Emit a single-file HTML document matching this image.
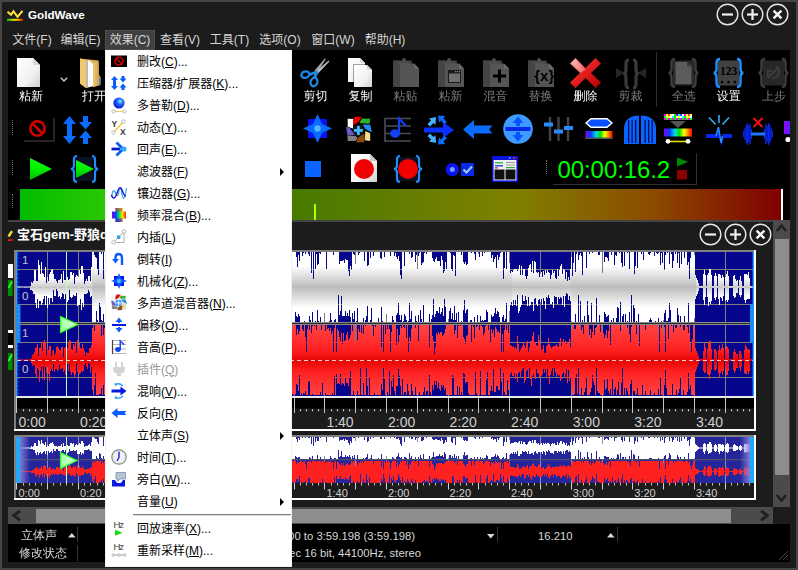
<!DOCTYPE html><html><head><meta charset="utf-8"><title>GoldWave</title><style>
*{box-sizing:border-box;margin:0;padding:0}
html,body{width:798px;height:570px;overflow:hidden;background:#1c1c1c}
body{position:relative;font-family:"Liberation Sans","Noto Sans CJK SC",sans-serif;font-size:12px;color:#fff}
.abs,svg.i{position:absolute}
svg{overflow:visible;display:block}
#frame{position:absolute;left:0;top:0;width:798px;height:570px;border:2px solid #454545;pointer-events:none;z-index:50}
#title{position:absolute;left:28px;top:7px;font-weight:bold;font-size:11.7px;line-height:16px;color:#fff;white-space:nowrap}
.mb{position:absolute;top:30px;height:20px;line-height:20px;font-size:12px;color:#d6d6d6;white-space:nowrap;text-align:center}
.mb.sel{background:#404040;outline:1px dotted #5a5a5a;outline-offset:-1px}
#tb{position:absolute;left:8px;top:50px;width:782px;height:170px;background:#000;overflow:hidden}
.lbl{position:absolute;top:39px;width:40px;text-align:center;font-size:12px;line-height:14px;color:#fff;white-space:nowrap;font-family:"Liberation Sans","WenQuanYi Zen Hei","Noto Sans CJK SC",sans-serif}
.lbl.d{color:#7c7c7c}
.grip{position:absolute;width:1px;border-left:1px dotted #777}
#menu{position:absolute;left:105px;top:50px;width:187px;height:517px;background:#fff;border:1px solid #f0f0f0;border-top-color:#fff;z-index:40;color:#000;overflow:hidden}
.mi{position:absolute;left:0;width:185px;height:22px;line-height:22px;font-size:12px;white-space:nowrap}
.mi span.t{position:absolute;left:31px;top:0}
.mi.dis{color:#9a9a9a}
.mi u{text-decoration:underline;text-underline-offset:1px}
.arr{position:absolute;left:174px;top:7px;width:0;height:0;border-left:4px solid #000;border-top:4px solid transparent;border-bottom:4px solid transparent}
#status{position:absolute;left:8px;top:524px;width:782px;height:38px;background:#000;overflow:hidden;font-size:11.3px;color:#d8d8d8}
#status .c{position:absolute;white-space:nowrap;line-height:14px}
#status .cj{font-family:"Liberation Sans","WenQuanYi Zen Hei","Noto Sans CJK SC",sans-serif;font-size:12px}
.vsep{position:absolute;width:1px;background:#383838}
.tl{position:absolute;font-size:14px;line-height:14px;color:#cfcfcf;white-space:nowrap}
.tl2{position:absolute;font-size:11px;line-height:11px;color:#cfcfcf;white-space:nowrap}
</style></head><body>
<svg class="i" style="left:7px;top:10px" width="16" height="11" viewBox="0 0 16 11" ><defs><linearGradient id="gbar" x1="0" x2="1" y1="0" y2="0"><stop offset="0" stop-color="#00d000"/><stop offset="0.45" stop-color="#e8e800"/><stop offset="0.7" stop-color="#ffb000"/><stop offset="1" stop-color="#ff0000"/></linearGradient></defs><polyline points="0.5,1.8 4,4.8 6.5,1.2 10.5,6.8 15.5,0.8" fill="none" stroke="#ffe23a" stroke-width="2.1" stroke-linejoin="miter"/><rect x="0" y="8.8" width="16" height="2" fill="url(#gbar)"/></svg>
<div id="title">GoldWave</div>
<svg class="i" style="left:716.2px;top:3.0999999999999996px" width="23" height="23" viewBox="0 0 23 23" ><circle cx="11.5" cy="11.5" r="10.3" fill="none" stroke="#e6e6e6" stroke-width="1.4"/><rect x="6" y="10.4" width="11" height="2.2" fill="#f0f0f0"/></svg>
<svg class="i" style="left:741.2px;top:3.0999999999999996px" width="23" height="23" viewBox="0 0 23 23" ><circle cx="11.5" cy="11.5" r="10.3" fill="none" stroke="#e6e6e6" stroke-width="1.4"/><rect x="6" y="10.4" width="11" height="2.2" fill="#f0f0f0"/><rect x="10.4" y="6" width="2.2" height="11" fill="#f0f0f0"/></svg>
<svg class="i" style="left:766.2px;top:3.0999999999999996px" width="23" height="23" viewBox="0 0 23 23" ><circle cx="11.5" cy="11.5" r="10.3" fill="none" stroke="#e6e6e6" stroke-width="1.4"/><path d="M7.6 7.6L15.4 15.4M15.4 7.6L7.6 15.4" stroke="#f4f4f4" stroke-width="2.4"/></svg>
<div class="mb" style="left:8px;width:48px">文件(F)</div>
<div class="mb" style="left:56px;width:49px">编辑(E)</div>
<div class="mb sel" style="left:105px;width:50px">效果(C)</div>
<div class="mb" style="left:155px;width:50px">查看(V)</div>
<div class="mb" style="left:205px;width:49px">工具(T)</div>
<div class="mb" style="left:254px;width:52px">选项(O)</div>
<div class="mb" style="left:306px;width:54px">窗口(W)</div>
<div class="mb" style="left:360px;width:50px">帮助(H)</div>
<div id="tb">
<svg width="0" height="0" style="position:absolute"><defs>
<linearGradient id="pg" x1="0" y1="0" x2="1" y2="1"><stop offset="0" stop-color="#ffffff"/><stop offset="0.6" stop-color="#f2f2f2"/><stop offset="1" stop-color="#cfcfcf"/></linearGradient>
<linearGradient id="rainbow" x1="0" x2="1" y1="0" y2="0"><stop offset="0" stop-color="#8000ff"/><stop offset="0.2" stop-color="#0040ff"/><stop offset="0.4" stop-color="#00e0e0"/><stop offset="0.55" stop-color="#00e000"/><stop offset="0.72" stop-color="#ffff00"/><stop offset="0.86" stop-color="#ff8000"/><stop offset="1" stop-color="#ff0000"/></linearGradient>
<linearGradient id="gplay" x1="0" y1="0" x2="0" y2="1"><stop offset="0" stop-color="#10ff10"/><stop offset="0.5" stop-color="#00f000"/><stop offset="1" stop-color="#00b800"/></linearGradient>
<linearGradient id="redx" x1="0" y1="0" x2="1" y2="1"><stop offset="0" stop-color="#ffb0b0"/><stop offset="0.45" stop-color="#e82020"/><stop offset="1" stop-color="#b00000"/></linearGradient>
<linearGradient id="fold" x1="0" y1="0" x2="1" y2="0"><stop offset="0" stop-color="#f0c878"/><stop offset="1" stop-color="#c8963c"/></linearGradient>
<radialGradient id="ball" cx="0.6" cy="0.35" r="0.7"><stop offset="0" stop-color="#9fe8ff"/><stop offset="0.35" stop-color="#1e78ff"/><stop offset="1" stop-color="#0000d0"/></radialGradient>
</defs></svg>
<div class="grip" style="left:4px;top:70px;height:15px"></div>
<div class="grip" style="left:4px;top:110px;height:15px"></div>
<div class="grip" style="left:4px;top:144px;height:14px"></div>
<div class="grip" style="left:538px;top:110px;height:14px"></div>
<svg class="i" style="left:9px;top:8px" width="23" height="29" viewBox="0 0 23 29" ><path d="M0 0H16L23 7V29H0Z" fill="url(#pg)"/><path d="M16 0V7H23Z" fill="#d8d8d8"/></svg>
<svg class="i" style="left:52px;top:27px" width="8" height="5" viewBox="0 0 8 5" ><path d="M0.8 0.8L4 4L7.2 0.8" fill="none" stroke="#c8c8c8" stroke-width="1.5"/></svg>
<svg class="i" style="left:72px;top:8px" width="22" height="31" viewBox="0 0 22 31" ><path d="M0 0.5L18.5 2.5L19 18L14 28L6 30L0 25.5Z" fill="#dcae54"/><path d="M0 0.5L6 3V30L0 25.5Z" fill="#f0c870"/><path d="M6 3.2L9.5 2.2L13 6V28L7 29.6Z" fill="#fcfcfc"/><path d="M6 3.2L8 3V29.2L7 29.6L6 29Z" fill="#b8b8b8"/><path d="M13 5L18.5 3L19 17L20.6 19V27L13 29.2Z" fill="url(#fold)"/><rect x="19.2" y="20" width="1.5" height="7" fill="#3c78e0"/></svg>
<div class="lbl" style="left:3px">粘新</div>
<div class="lbl" style="left:66px">打开</div>
<svg class="i" style="left:292px;top:7px" width="30" height="31" viewBox="0 0 30 31" ><path d="M14.6 13.6L25 1.3L25.8 2L17.4 15.4Z" fill="#a4a4a4"/><path d="M15.2 15L28.6 3.5L29.4 4.4L17.8 16.8Z" fill="#b8b8b8"/><path d="M8.5 16.5L17 13.2L18.4 15.6L10 19Z" fill="#1e88e0"/><path d="M13 20.5L15.6 14.2L18.2 15.2L16.2 21.5Z" fill="#1e88e0"/><ellipse cx="5.3" cy="17.6" rx="4.1" ry="3.1" transform="rotate(-18 5.3 17.6)" fill="none" stroke="#1e88e0" stroke-width="2.3"/><ellipse cx="14" cy="25" rx="3.3" ry="4.3" transform="rotate(18 14 25)" fill="none" stroke="#1e88e0" stroke-width="2.3"/></svg>
<div class="lbl" style="left:287.5px">剪切</div>
<svg class="i" style="left:340px;top:8px" width="17" height="24" viewBox="0 0 17 24" ><path d="M0 0H12L17 5V24H0Z" fill="url(#pg)"/><path d="M12 0V5H17Z" fill="#d8d8d8"/></svg>
<svg class="i" style="left:346px;top:15px" width="19" height="22" viewBox="0 0 19 22" ><path d="M-1 -1H15L20 5V23H-1Z" fill="#000" opacity="0.35"/><path d="M0 0H13L18 5V22H0Z" fill="url(#pg)"/><path d="M13 0V5H18Z" fill="#d8d8d8"/></svg>
<div class="lbl" style="left:332.5px">复制</div>
<svg class="i" style="left:385px;top:8px" width="26" height="29" viewBox="0 0 26 29" ><rect x="0" y="2.5" width="19" height="26.5" fill="#3a3a3a"/><rect x="0" y="2.5" width="7" height="26.5" fill="#444"/><path d="M5 4.5Q5 3 7 3H9Q9 0 11 0Q13 0 13 3H15Q17 3 17 4.5V6H5Z" fill="#4c4c4c"/><path d="M7 5.5H21L26 10.5V29H7Z" fill="#555"/><path d="M21 5.5V10.5H26Z" fill="#6a6a6a"/></svg>
<div class="lbl d" style="left:377.5px">粘贴</div>
<svg class="i" style="left:430px;top:8px" width="26" height="29" viewBox="0 0 26 29" ><rect x="0" y="2.5" width="19" height="26.5" fill="#3a3a3a"/><rect x="0" y="2.5" width="7" height="26.5" fill="#444"/><path d="M5 4.5Q5 3 7 3H9Q9 0 11 0Q13 0 13 3H15Q17 3 17 4.5V6H5Z" fill="#4c4c4c"/><path d="M7 5.5H21L26 10.5V29H7Z" fill="#555"/><path d="M21 5.5V10.5H26Z" fill="#6a6a6a"/><rect x="10" y="12" width="13" height="13" fill="#1a1a1a"/><rect x="11" y="15.5" width="11" height="8.5" fill="#707070"/><rect x="17" y="13" width="1.2" height="1.2" fill="#888"/><rect x="19" y="13" width="1.2" height="1.2" fill="#888"/><rect x="21" y="13" width="1.2" height="1.2" fill="#888"/></svg>
<div class="lbl d" style="left:422.5px">粘新</div>
<svg class="i" style="left:475px;top:8px" width="26" height="29" viewBox="0 0 26 29" ><rect x="0" y="2.5" width="19" height="26.5" fill="#3a3a3a"/><rect x="0" y="2.5" width="7" height="26.5" fill="#444"/><path d="M5 4.5Q5 3 7 3H9Q9 0 11 0Q13 0 13 3H15Q17 3 17 4.5V6H5Z" fill="#4c4c4c"/><path d="M7 5.5H21L26 10.5V29H7Z" fill="#555"/><path d="M21 5.5V10.5H26Z" fill="#6a6a6a"/><rect x="10" y="16.5" width="13" height="3" fill="#000"/><rect x="15" y="11.5" width="3" height="13" fill="#000"/></svg>
<div class="lbl d" style="left:467.5px">混音</div>
<svg class="i" style="left:520px;top:8px" width="26" height="29" viewBox="0 0 26 29" ><rect x="0" y="2.5" width="19" height="26.5" fill="#3a3a3a"/><rect x="0" y="2.5" width="7" height="26.5" fill="#444"/><path d="M5 4.5Q5 3 7 3H9Q9 0 11 0Q13 0 13 3H15Q17 3 17 4.5V6H5Z" fill="#4c4c4c"/><path d="M7 5.5H21L26 10.5V29H7Z" fill="#555"/><path d="M21 5.5V10.5H26Z" fill="#6a6a6a"/><text x="16.3" y="23" font-family="Liberation Sans,sans-serif" font-size="15" font-weight="bold" text-anchor="middle" fill="#000">{x}</text></svg>
<div class="lbl d" style="left:512.5px">替换</div>
<svg class="i" style="left:562px;top:8px" width="31" height="30" viewBox="0 0 31 30" ><path d="M5.5 0L15.5 10L25.5 0L31 5.5L21 15L31 24.5L25.5 30L15.5 20L5.5 30L0 24.5L10 15L0 5.5Z" fill="url(#redx)"/><path d="M5.5 1.5L15.5 11.5L10.5 15L1.5 5.5Z" fill="#fff" opacity="0.35"/></svg>
<div class="lbl" style="left:557.5px">删除</div>
<svg class="i" style="left:608px;top:9px" width="30" height="30" viewBox="0 0 30 30" ><path d="M0 9L8 14L0 19ZM30 9L22 14L30 19Z" fill="#262626"/><path d="M13 1Q10 1 10 4.5V11Q10 14 7.5 14.5Q10 15 10 18V25Q10 29 13 29M17 1Q20 1 20 4.5V11Q20 14 22.5 14.5Q20 15 20 18V25Q20 29 17 29" fill="none" stroke="#3a3a3a" stroke-width="3.2"/></svg>
<div class="lbl d" style="left:602.5px">剪裁</div>
<div class="vsep" style="left:648px;top:2px;height:55px;background:#2e2e2e"></div>
<svg class="i" style="left:660px;top:8px" width="31" height="30" viewBox="0 0 31 30" ><rect x="5" y="2.5" width="21" height="25" fill="#2a2a2a"/><path d="M7.5 4H19L23.5 8.5V26H7.5Z" fill="#5c5c5c"/><path d="M19 4V8.5H23.5Z" fill="#3a3a3a"/><path d="M7 1Q3.5 1 3.5 5V11Q3.5 14.5 0.8 15Q3.5 15.5 3.5 19V25Q3.5 29 7 29" fill="none" stroke="#3e3e3e" stroke-width="2.4"/><path d="M24 1Q27.5 1 27.5 5V11Q27.5 14.5 30.2 15Q27.5 15.5 27.5 19V25Q27.5 29 24 29" fill="none" stroke="#3e3e3e" stroke-width="2.4"/></svg>
<div class="lbl d" style="left:655.8px">全选</div>
<svg class="i" style="left:705px;top:8px" width="31" height="30" viewBox="0 0 31 30" ><rect x="5" y="2.5" width="21" height="25" fill="#414141"/><text x="15.5" y="17" font-family="Liberation Serif,serif" font-weight="bold" font-size="11.5" text-anchor="middle" fill="#000">123</text><path d="M9 22.5l1.6 1.6l-1.6 1.6l-1.6-1.6ZM15.5 22.5l1.6 1.6l-1.6 1.6l-1.6-1.6ZM22 22.5l1.6 1.6l-1.6 1.6l-1.6-1.6Z" fill="#000"/><path d="M7 1Q3.5 1 3.5 5V11Q3.5 14.5 0.8 15Q3.5 15.5 3.5 19V25Q3.5 29 7 29" fill="none" stroke="#1e90ff" stroke-width="2.4"/><path d="M24 1Q27.5 1 27.5 5V11Q27.5 14.5 30.2 15Q27.5 15.5 27.5 19V25Q27.5 29 24 29" fill="none" stroke="#1e90ff" stroke-width="2.4"/></svg>
<div class="lbl" style="left:700.7px">设置</div>
<svg class="i" style="left:750px;top:8px" width="31" height="30" viewBox="0 0 31 30" ><rect x="5" y="2.5" width="21" height="25" fill="#272727"/><path d="M10 20V13H14.5M10 20L19 11M14 20Q21 20 21 13.5Q21 10 18 9" fill="none" stroke="#3c3c3c" stroke-width="2.2"/><path d="M7 1Q3.5 1 3.5 5V11Q3.5 14.5 0.8 15Q3.5 15.5 3.5 19V25Q3.5 29 7 29" fill="none" stroke="#3e3e3e" stroke-width="2.4"/><path d="M24 1Q27.5 1 27.5 5V11Q27.5 14.5 30.2 15Q27.5 15.5 27.5 19V25Q27.5 29 24 29" fill="none" stroke="#3e3e3e" stroke-width="2.4"/></svg>
<div class="lbl d" style="left:745.9px">上步</div>
<svg class="i" style="left:15px;top:67px" width="32" height="25" viewBox="0 0 32 25" ><rect x="0.5" y="0.5" width="30" height="23" fill="#000"/><path d="M1 24H31V1" fill="none" stroke="#303030" stroke-width="1.6"/><circle cx="14.5" cy="11.5" r="7.2" fill="none" stroke="#d40000" stroke-width="2.6"/><path d="M9.5 6.5L19.5 16.5" stroke="#d40000" stroke-width="2.6"/></svg>
<svg class="i" style="left:54px;top:66px" width="32" height="29" viewBox="0 0 32 29" ><path d="M7.5 0L14 8H10V20H14L7.5 28L1 20H5V8H1Z" fill="#0a6cff"/><path d="M21 0H26V6H30L23.5 13.5L17 6H21ZM23.5 14.5L30 22H26V28H21V22H17Z" fill="#0a6cff"/></svg>
<svg class="i" style="left:295px;top:64px" width="29" height="29" viewBox="0 0 29 29" ><rect x="5" y="5" width="19" height="19" fill="#0a14f0"/><path d="M14.5 0L19 10L29 14.5L19 19L14.5 29L10 19L0 14.5L10 10Z" fill="#0a6cff"/><circle cx="14.5" cy="14.5" r="3.2" fill="#50b8ff"/></svg>
<svg class="i" style="left:338px;top:67px" width="26" height="26" viewBox="0 0 26 26" ><path d="M1.7 1.8L7.3 2.1L7.0 11.6L1.7 9.8Z" fill="#ffffff"/><path d="M9.1 -0.3L15.8 -0.3L12.9 4.6L7.3 8.4L7.0 3.5Z" fill="#f00000"/><path d="M15.8 1.4L24.2 1.8L23.5 6.7L13.3 6.0Z" fill="#28b428"/><path d="M16.5 7.4L24.2 7.7L25.9 15.5L19.3 11.9Z" fill="#1e8cf0"/><path d="M19.3 14.1L24.2 16.2L24.2 23.9L18.6 23.2Z" fill="#f0dc90"/><path d="M18.2 16.5L18.2 25.3L10.1 25.6L12.2 20.4Z" fill="#8c4a10"/><path d="M1.4 18.3L10.1 19.3L11.5 21.1L9.8 23.9L1.7 23.9Z" fill="#808080"/><path d="M-0.0 9.8L3.8 10.9L9.1 18.3L1.4 17.9Z" fill="#6a5acd"/><circle cx="12.4" cy="13.4" r="5.6" fill="#181818"/><path d="M12.4 8.9V17.9M7.9 13.4H16.9" stroke="#40b8ff" stroke-width="2.8"/></svg>
<svg class="i" style="left:376px;top:67px" width="28" height="26" viewBox="0 0 28 26" ><path d="M1 1V25M1 1.5H27M1 9H27M1 16.5H27M1 24H27" stroke="#4a4e58" stroke-width="1.6" fill="none"/><ellipse cx="11" cy="16.5" rx="5" ry="4.3" fill="#1040f0"/><path d="M15 16V1.5L22 9" stroke="#1040f0" stroke-width="2.2" fill="none"/></svg>
<svg class="i" style="left:416px;top:65px" width="30" height="30" viewBox="0 0 30 30" ><path d="M0 12.5H19V7L30 15L19 23V17.5H0Z" fill="#0a30ff"/><path d="M12 2L5 3.5L7 5.5L3.5 9L6 11.5L9.5 8L11.5 10ZM12 28L5 26.5L7 24.5L3.5 21L6 18.5L9.5 22L11.5 20Z" fill="#40b0ff"/><path d="M14 0.5L21 1L19.5 3.5L23 7L20.5 9L17 5.5L15 7.5ZM14 29.5L21 29L19.5 26.5L23 23L20.5 21L17 24.5L15 22.5Z" fill="#0a6cff"/></svg>
<svg class="i" style="left:455px;top:70px" width="30" height="19" viewBox="0 0 30 19" ><path d="M0 9.5L11 0V5.5H29.5L26 9.5L29.5 13.5H11V19Z" fill="#0a6cff"/></svg>
<svg class="i" style="left:495px;top:64px" width="30" height="30" viewBox="0 0 30 30" ><circle cx="15" cy="15" r="14.8" fill="#3c9cff"/><rect x="2.5" y="13" width="25" height="4" fill="#0828e8"/><path d="M15 2.5L20.5 9H17V12H13V9H9.5ZM15 27.5L20.5 21H17V18H13V21H9.5Z" fill="#0a50ff"/></svg>
<svg class="i" style="left:536px;top:67px" width="29" height="24" viewBox="0 0 29 24" ><path d="M6 0V24M14.5 0V24M24 0V24" stroke="#404448" stroke-width="2.4"/><rect x="0" y="5.5" width="9" height="4" fill="#2a8cff"/><rect x="10" y="12.5" width="9" height="4" fill="#2a8cff"/><rect x="20" y="9" width="9" height="4" fill="#2a8cff"/></svg>
<svg class="i" style="left:577px;top:68px" width="28" height="22" viewBox="0 0 28 22" ><path d="M1 5L6 0.8H22L27 5L22 9.2H6Z" fill="#0a50ff" stroke="#fff" stroke-width="1.4"/><rect x="0.5" y="13" width="27" height="8" fill="url(#rainbow)"/><rect x="0.5" y="19.5" width="27" height="1.5" fill="#555"/></svg>
<svg class="i" style="left:616px;top:65px" width="32" height="30" viewBox="0 0 32 30" ><path d="M0 29V14Q0 1 15 0.5V29ZM17 29V0.5Q32 1 32 14V29Z" fill="#0a64ff"/><rect x="4" y="5" width="1.3" height="23" fill="#001060"/><rect x="7.5" y="5" width="1.3" height="23" fill="#001060"/><rect x="11" y="5" width="1.3" height="23" fill="#001060"/><rect x="20.5" y="5" width="1.3" height="23" fill="#001060"/><rect x="24" y="5" width="1.3" height="23" fill="#001060"/><rect x="27.5" y="5" width="1.3" height="23" fill="#001060"/></svg>
<svg class="i" style="left:656px;top:64px" width="28" height="30" viewBox="0 0 28 30" ><rect x="0" y="0" width="2" height="2" fill="#ff00ff"/><rect x="0" y="2" width="2" height="2" fill="#00ff00"/><rect x="0" y="4" width="2" height="2" fill="#ff00ff"/><rect x="2" y="0" width="2" height="2" fill="#ffff00"/><rect x="2" y="2" width="2" height="2" fill="#ffff80"/><rect x="2" y="4" width="2" height="2" fill="#00ff00"/><rect x="4" y="0" width="2" height="2" fill="#ff4040"/><rect x="4" y="2" width="2" height="2" fill="#ffff00"/><rect x="4" y="4" width="2" height="2" fill="#ff00ff"/><rect x="6" y="0" width="2" height="2" fill="#ffff80"/><rect x="6" y="2" width="2" height="2" fill="#ffffff"/><rect x="6" y="4" width="2" height="2" fill="#00ff00"/><rect x="8" y="0" width="2" height="2" fill="#ffffff"/><rect x="8" y="2" width="2" height="2" fill="#00ffff"/><rect x="8" y="4" width="2" height="2" fill="#ff00ff"/><rect x="10" y="0" width="2" height="2" fill="#00ff00"/><rect x="10" y="2" width="2" height="2" fill="#00ff00"/><rect x="10" y="4" width="2" height="2" fill="#00ff00"/><rect x="12" y="0" width="2" height="2" fill="#8000ff"/><rect x="12" y="2" width="2" height="2" fill="#ffff80"/><rect x="12" y="4" width="2" height="2" fill="#ff00ff"/><rect x="14" y="0" width="2" height="2" fill="#00ffff"/><rect x="14" y="2" width="2" height="2" fill="#ffff00"/><rect x="14" y="4" width="2" height="2" fill="#00ff00"/><rect x="16" y="0" width="2" height="2" fill="#4040ff"/><rect x="16" y="2" width="2" height="2" fill="#ffffff"/><rect x="16" y="4" width="2" height="2" fill="#ff00ff"/><rect x="18" y="0" width="2" height="2" fill="#ffffff"/><rect x="18" y="2" width="2" height="2" fill="#00ffff"/><rect x="18" y="4" width="2" height="2" fill="#00ff00"/><rect x="20" y="0" width="2" height="2" fill="#ff00ff"/><rect x="20" y="2" width="2" height="2" fill="#00ff00"/><rect x="20" y="4" width="2" height="2" fill="#ff00ff"/><rect x="22" y="0" width="2" height="2" fill="#ffff00"/><rect x="22" y="2" width="2" height="2" fill="#ffff80"/><rect x="22" y="4" width="2" height="2" fill="#00ff00"/><rect x="24" y="0" width="2" height="2" fill="#ff4040"/><rect x="24" y="2" width="2" height="2" fill="#ffff00"/><rect x="24" y="4" width="2" height="2" fill="#ff00ff"/><rect x="26" y="0" width="2" height="2" fill="#ffff80"/><rect x="26" y="2" width="2" height="2" fill="#ffffff"/><rect x="26" y="4" width="2" height="2" fill="#00ff00"/><path d="M6 7H22L14 14Z" fill="#555"/><rect x="0" y="14.5" width="28" height="8" fill="url(#rainbow)"/><path d="M4 27.5H24" stroke="#e8e000" stroke-width="1.6"/><circle cx="4" cy="27.3" r="2.4" fill="#fff"/><circle cx="24" cy="27.3" r="2.4" fill="#fff"/></svg>
<svg class="i" style="left:698px;top:64px" width="26" height="32" viewBox="0 0 26 32" ><path d="M13 1V9M3 3.5L9.5 10.5M23 3.5L16.5 10.5" stroke="#30b0f0" stroke-width="1.6" fill="none"/><path d="M0 20H10L12 14L13.5 20L15 30L16.5 20H26V24H17.5L15.5 32L13 24H0Z" fill="#0828f0"/><path d="M10 22L12.5 13L14 22L15 29L16.5 22" stroke="#2a8cff" stroke-width="1.4" fill="none"/></svg>
<svg class="i" style="left:735px;top:65px" width="30" height="32" viewBox="0 0 30 32" ><rect x="0.0" y="16.0" width="1.3" height="6" fill="#0828f0"/><rect x="28.7" y="16.0" width="1.3" height="6" fill="#0828f0"/><rect x="1.3" y="13.0" width="1.3" height="12" fill="#0828f0"/><rect x="27.4" y="13.0" width="1.3" height="12" fill="#0828f0"/><rect x="2.6" y="10.0" width="1.3" height="18" fill="#0828f0"/><rect x="26.1" y="10.0" width="1.3" height="18" fill="#0828f0"/><rect x="3.9" y="8.0" width="1.3" height="22" fill="#0828f0"/><rect x="24.8" y="8.0" width="1.3" height="22" fill="#0828f0"/><rect x="5.2" y="11.0" width="1.3" height="16" fill="#0828f0"/><rect x="23.5" y="11.0" width="1.3" height="16" fill="#0828f0"/><rect x="6.5" y="9.0" width="1.3" height="20" fill="#0828f0"/><rect x="22.2" y="9.0" width="1.3" height="20" fill="#0828f0"/><rect x="7.8" y="14.0" width="1.3" height="10" fill="#0828f0"/><rect x="20.9" y="14.0" width="1.3" height="10" fill="#0828f0"/><rect x="8" y="17.5" width="14" height="3" fill="#1e78ff"/><path d="M10.5 3L19.5 12M19.5 3L10.5 12" stroke="#e81010" stroke-width="2.2"/></svg>
<svg class="i" style="left:776px;top:71px" width="7" height="22" viewBox="0 0 7 22" ><defs><linearGradient id="pv" x1="0" y1="0" x2="1" y2="0"><stop offset="0" stop-color="#a000ff"/><stop offset="1" stop-color="#3030ff"/></linearGradient></defs><rect x="0" y="0" width="7" height="13" fill="url(#pv)"/><circle cx="4" cy="18.5" r="2.6" fill="#fff"/></svg>
<svg class="i" style="left:22px;top:108px" width="22" height="22" viewBox="0 0 22 22" ><path d="M0 0L22 11L0 22Z" fill="url(#gplay)"/></svg>
<svg class="i" style="left:62px;top:105px" width="29" height="28" viewBox="0 0 29 28" ><rect x="6.5" y="2" width="16" height="24" fill="#0a1224"/><path d="M6 5L24 14L6 23Z" fill="url(#gplay)"/><path d="M7 1Q4 1 4 4.5V10.5Q4 13.5 1 14.0Q4 14.5 4 17.5V23.5Q4 27 7 27" fill="none" stroke="#1e8cff" stroke-width="2.2"/><path d="M22 1Q25 1 25 4.5V10.5Q25 13.5 28 14.0Q25 14.5 25 17.5V23.5Q25 27 22 27" fill="none" stroke="#1e8cff" stroke-width="2.2"/></svg>
<svg class="i" style="left:297px;top:111px" width="16" height="16" viewBox="0 0 16 16" ><rect width="16" height="16" fill="#0a64ff"/></svg>
<svg class="i" style="left:343px;top:104px" width="26" height="28" viewBox="0 0 26 28" ><path d="M0 0H19L26 7V28H0Z" fill="url(#pg)"/><path d="M19 0V7H26Z" fill="#c8c8c8"/><circle cx="13" cy="15" r="10" fill="#f00000"/></svg>
<svg class="i" style="left:385px;top:105px" width="30" height="28" viewBox="0 0 30 28" ><rect x="6.5" y="2" width="17" height="24" fill="#0a1224"/><circle cx="15" cy="14" r="10" fill="#f00000"/><path d="M7 1Q4 1 4 4.5V10.5Q4 13.5 1 14.0Q4 14.5 4 17.5V23.5Q4 27 7 27" fill="none" stroke="#1e8cff" stroke-width="2.2"/><path d="M23 1Q26 1 26 4.5V10.5Q26 13.5 29 14.0Q26 14.5 26 17.5V23.5Q26 27 23 27" fill="none" stroke="#1e8cff" stroke-width="2.2"/></svg>
<svg class="i" style="left:437px;top:112px" width="30" height="15" viewBox="0 0 30 15" ><circle cx="7.3" cy="7.5" r="6.6" fill="#0a14f0"/><circle cx="7.3" cy="7.5" r="2.5" fill="#70a0ff"/><rect x="16" y="1" width="13" height="13" fill="#0a28e8"/><path d="M18.5 7.5L21.5 10.5L27 4.5" stroke="#a0c8ff" stroke-width="2.2" fill="none"/></svg>
<svg class="i" style="left:484px;top:106px" width="26" height="26" viewBox="0 0 26 26" ><rect x="0" y="0" width="26" height="26" fill="#0a14d8"/><rect x="1.6" y="4" width="22.8" height="20.4" fill="#f0f0f0"/><rect x="2.5" y="13.5" width="10" height="10" fill="#101010"/><rect x="13.5" y="13.5" width="10" height="10" fill="#101010"/><rect x="3" y="6" width="8" height="1.5" fill="#40c040"/><rect x="3" y="9" width="8" height="1.5" fill="#3050e0"/><rect x="3" y="11.3" width="3" height="1.2" fill="#e02020"/><rect x="14" y="6" width="9" height="1" fill="#999"/><rect x="14" y="8.5" width="9" height="1" fill="#999"/><rect x="14" y="11" width="9" height="1.2" fill="#40a040"/><rect x="21" y="1.3" width="2.2" height="1.6" fill="#f03030"/><rect x="17" y="1.3" width="1.4" height="1.4" fill="#a0b0ff"/></svg>
<div class="abs" style="left:545px;top:103px;width:144px;height:32px;border-right:1px solid #303030;border-bottom:1px solid #303030"></div>
<div class="abs" style="left:549.5px;top:106px;font-size:24px;line-height:28px;color:#00ff00;white-space:nowrap;letter-spacing:-0.08px">00:00:16.2</div>
<svg class="i" style="left:669px;top:107px" width="12" height="23" viewBox="0 0 12 23" ><path d="M0 0.5L11 5L0 9.5Z" fill="#008800"/><rect x="0" y="13" width="10" height="9.5" fill="#8b0000"/></svg>
<div class="abs" style="left:12px;top:139px;width:761px;height:30.5px;background:linear-gradient(90deg,rgb(0,128,0) 0%,rgb(70,122,0) 35.6%,rgb(128,128,0) 65%,rgb(140,75,0) 83%,rgb(128,0,0) 100%)"></div>
<div class="abs" style="left:12px;top:139px;width:200px;height:30.5px;background:linear-gradient(90deg,rgb(0,188,0) 0%,rgb(42,200,0) 42%,rgb(90,210,0) 100%)"></div>
<div class="abs" style="left:306px;top:154px;width:2px;height:16px;background:#b0ff00"></div>
<div class="abs" style="left:773px;top:139px;width:2px;height:30.5px;background:#fff"></div>
</div>
<div class="abs" style="left:8px;top:219.5px;width:782px;height:2px;background:#444"></div>
<svg class="i" style="left:8px;top:230px" width="5" height="12" viewBox="0 0 5 12" ><path d="M0.5 6.5L4 1.2" stroke="#f0e030" stroke-width="2.4"/><rect x="0" y="9.2" width="4.5" height="1.8" fill="#f01010"/></svg>
<div class="abs" style="left:17px;top:227px;font-size:13px;line-height:16px;font-weight:bold;color:#fff;white-space:nowrap;font-family:'Liberation Sans','Noto Sans CJK SC',sans-serif">宝石gem-野狼disco.mp3</div>
<svg class="i" style="left:699.2px;top:222.7px" width="23" height="23" viewBox="0 0 23 23" ><circle cx="11.5" cy="11.5" r="10.3" fill="none" stroke="#e6e6e6" stroke-width="1.4"/><rect x="6" y="10.4" width="11" height="2.2" fill="#f0f0f0"/></svg>
<svg class="i" style="left:724.2px;top:222.7px" width="23" height="23" viewBox="0 0 23 23" ><circle cx="11.5" cy="11.5" r="10.3" fill="none" stroke="#e6e6e6" stroke-width="1.4"/><rect x="6" y="10.4" width="11" height="2.2" fill="#f0f0f0"/><rect x="10.4" y="6" width="2.2" height="11" fill="#f0f0f0"/></svg>
<svg class="i" style="left:749.2px;top:222.7px" width="23" height="23" viewBox="0 0 23 23" ><circle cx="11.5" cy="11.5" r="10.3" fill="none" stroke="#e6e6e6" stroke-width="1.4"/><path d="M7.6 7.6L15.4 15.4M15.4 7.6L7.6 15.4" stroke="#f4f4f4" stroke-width="2.4"/></svg>
<div class="abs" style="left:8px;top:264px;width:4.5px;height:14px;background:#fff"></div>
<svg class="i" style="left:8px;top:280px" width="5" height="16" viewBox="0 0 5 16" ><rect width="4.6" height="16" fill="#008a00"/><path d="M0.5 8L4 1.5" stroke="#30ff30" stroke-width="1.6"/></svg>
<div class="abs" style="left:8px;top:330px;width:4.5px;height:18px;background:#000;border-top:3px solid #fff;border-bottom:3px solid #fff"></div>
<svg class="i" style="left:8px;top:353px" width="5" height="17" viewBox="0 0 5 17" ><rect width="4.6" height="17" fill="#008a00"/><path d="M0.5 8L4 1.5" stroke="#30ff30" stroke-width="1.6"/></svg>
<svg class="i" style="left:14px;top:250px" width="742" height="181" viewBox="0 0 742 181" ><defs><linearGradient id="wg" gradientUnits="userSpaceOnUse" x1="0" y1="2" x2="0" y2="72"><stop offset="0" stop-color="#fff"/><stop offset="0.2" stop-color="#fff"/><stop offset="0.5" stop-color="#bcbcbc"/><stop offset="0.8" stop-color="#fff"/><stop offset="1" stop-color="#fff"/></linearGradient><linearGradient id="rg" gradientUnits="userSpaceOnUse" x1="0" y1="75" x2="0" y2="146"><stop offset="0" stop-color="#ff4444"/><stop offset="0.34" stop-color="#ff2222"/><stop offset="0.5" stop-color="#e60606"/><stop offset="0.66" stop-color="#ff2222"/><stop offset="1" stop-color="#ff4444"/></linearGradient><linearGradient id="wgn" gradientUnits="userSpaceOnUse" x1="0" y1="2" x2="0" y2="72"><stop offset="0.36" stop-color="#fff"/><stop offset="0.5" stop-color="#cdcdcd"/><stop offset="0.64" stop-color="#fff"/></linearGradient><linearGradient id="wgm" gradientUnits="userSpaceOnUse" x1="0" y1="2" x2="0" y2="72"><stop offset="0.28" stop-color="#fff"/><stop offset="0.5" stop-color="#c0c0c0"/><stop offset="0.72" stop-color="#fff"/></linearGradient><linearGradient id="pt" x1="0" y1="0" x2="1" y2="0"><stop offset="0" stop-color="#a8ffa8"/><stop offset="1" stop-color="#d8ffd8"/></linearGradient></defs><rect x="0" y="0" width="742" height="181" fill="#1c1c1c"/><rect x="2" y="2" width="738" height="144" fill="#06068c"/><path d="M33.5 2V146M64.5 2V146M95.5 2V146M126.5 2V146M156.5 2V146M187.5 2V146M218.5 2V146M249.5 2V146M280.5 2V146M310.5 2V146M341.5 2V146M372.5 2V146M403.5 2V146M434.5 2V146M464.5 2V146M495.5 2V146M526.5 2V146M557.5 2V146M588.5 2V146M618.5 2V146M649.5 2V146M680.5 2V146M711.5 2V146M2 19.5H740M2 54.5H740M2 92.5H740M2 127.5H740" stroke="#7e7e7e" stroke-width="1" fill="none"/><rect x="3" y="36.5" width="735" height="1" fill="#f4f4f4"/><rect x="3" y="109.5" width="735" height="1" fill="#ff2020"/><path d="M3 37V37H4H5H6H7H8H9H10H11H12H13H14H15H16V36H17V32H18V33H19V31H20V20H21H22V31H23H24V10H25V15H26V24H27V12H28V23H29V24H30V27H31V17H32V33H33V27H34V31H35V24H36V22H37V20H38V19H39V24H40V29H41H42V31H43V33H44V30H45H46V29H47V24H48V33H49V21H50V30H51H52V31H53V27H54V30H55V29H56V22H57H58V25H59V23H60V34H61V27H62V25H63V26H64V27H65V20H66V24H67V16H68H69V23H70V34H71V31H72V29H73V31H74V26H75H76V31H77V17H78V37V46H77V47H76V42H75V40H74V43H73V44H72H71H70V57H69V53H68V60H67V49H66V55H65H64V56H63V43H62V46H61H60V45H59V47H58V48H57V47H56V40H55V50H54V52H53V48H52V44H51V49H50V44H49V43H48V47H47V49H46V46H45V47H44V41H43V39H42V46H41H40V40H39V52H38V48H37H36V54H35V48H34V58H33V46H32V55H31V46H30V49H29V53H28V55H27V51H26H25V58H24V49H23V58H22V53H21V44H20H19V41H18V40H17H16V37H15H14H13H12H11H10H9H8H7H6H5H4H3Z" fill="url(#wgn)"/><path d="M78 37V2H79H80V5H81V7H82V8H83V19H84V25H85V2H86H87V4H88V2H89V29H90V2H91V4H92V2H93H94H95H96H97H98H99V7H100V2H101V28H102V5H103V9H104V2H105H106V7H107V2H108H109H110H111H112H113H114H115H116H117H118H119H120H121H122V17H123V5H124V2H125H126V12H127V7H128V2H129H130V12H131V2H132H133H134H135V7H136V3H137V2H138V4H139V2H140V21H141V12H142V20H143V26H144V8H145V2H146H147V6H148V4H149V3H150V5H151V4H152V11H153V29H154V16H155V7H156V19H157V2H158V6H159V17H160V2H161V5H162V2H163H164V5H165V2H166V9H167V2H168V4H169V2H170V6H171V2H172V4H173V2H174H175V7H176V3H177V14H178V11H179V2H180H181H182H183H184H185H186V4H187V14H188V2H189H190H191H192H193V11H194V2H195H196V4H197V2H198H199H200V14H201V2H202H203V6H204V2H205V5H206V2H207H208V7H209V2H210V3H211V2H212H213H214H215H216V18H217V2H218V4H219H220V26H221V10H222V12H223V29H224V18H225V2H226H227H228H229V9H230V2H231H232V22H233V4H234V2H235H236H237V6H238V2H239H240H241V4H242V5H243V2H244V4H245V2H246H247V18H248V4H249V2H250V6H251V2H252V4H253V2H254H255H256H257V3H258V6H259V26H260V10H261V8H262V2H263V5H264V2H265H266V6H267V3H268V14H269V3H270V2H271V3H272V2H273V3H274V2H275V4H276V2H277V12H278V2H279H280H281H282V7H283V17H284V5H285V11H286V2H287H288V6H289V3H290V2H291V4H292V2H293H294V4H295V6H296V2H297V23H298V2H299V29H300V2H301V19H302V4H303V15H304V14H305V3H306V4H307V2H308H309H310H311H312V19H313V2H314H315H316H317H318H319V5H320V2H321H322H323H324H325V14H326V11H327H328H329V10H330V13H331V9H332V10H333H334V21H335V26H336V16H337V20H338V2H339V4H340V5H341V14H342V2H343H344V5H345V3H346V2H347H348H349H350V11H351V2H352H353V16H354V15H355V2H356V8H357V2H358H359V6H360V2H361H362H363H364H365H366V8H367V9H368V2H369H370V7H371V2H372H373H374H375H376V6H377V2H378H379H380V6H381V3H382V7H383V9H384V6H385V11H386V25H387V29H388V2H389H390V16H391V2H392H393H394H395V4H396V2H397V8H398V7H399V2H400H401V12H402V5H403V19H404V6H405V3H406V2H407V15H408V13H409V12H410V3H411V2H412V4H413V2H414H415H416H417H418V8H419V11H420V12H421V9H422V7H423V11H424H425H426V16H427V6H428V10H429V23H430V21H431V12H432V19H433V2H434H435H436V3H437V19H438V21H439V5H440V6H441V26H442V2H443H444H445H446H447V5H448V2H449V12H450V14H451V12H452V15H453V14H454V2H455H456H457V3H458V2H459H460V4H461V10H462V2H463H464V4H465V7H466V2H467H468V6H469V2H470V3H471V2H472H473H474H475H476H477V8H478V5H479V12H480V9H481V7H482V18H483V5H484V10H485V7H486V3H487V2H488H489V29H490V18H491V2H492V19H493V2H494H495V13H496V23H497V21H498V37V52H497V55H496V61H495V72H494H493V53H492V69H491V71H490V65H489V67H488V72H487H486V67H485V62H484V61H483V64H482V58H481V63H480V66H479V67H478V65H477V72H476H475H474V62H473V60H472V70H471H470V71H469V70H468V71H467V66H466V72H465H464V65H463V72H462H461V67H460V72H459H458V70H457H456V72H455H454V59H453V60H452V63H451V50H450V60H449V72H448V71H447V72H446H445V62H444V72H443V63H442V70H441V56H440V70H439V63H438V69H437V58H436V61H435V69H434V72H433H432V57H431V49H430V66H429V58H428V62H427V64H426V57H425V63H424V61H423H422V64H421V67H420V49H419V65H418V69H417V72H416V64H415V72H414H413H412H411H410V55H409V72H408V69H407V60H406V72H405V65H404V72H403V71H402V66H401V72H400H399H398V61H397V69H396V53H395V71H394V72H393V70H392V66H391V64H390V71H389V72H388V65H387V70H386V65H385V53H384V63H383V65H382V72H381H380V70H379V66H378V72H377H376H375H374H373V64H372V72H371H370H369V71H368V57H367V72H366H365V68H364V72H363H362H361H360H359H358V58H357V70H356V72H355H354V56H353V66H352V70H351V72H350V68H349V72H348H347H346H345H344V58H343V71H342V72H341V61H340V69H339V63H338V72H337V67H336V60H335V66H334V63H333V66H332V61H331V66H330H329H328V46H327V61H326V65H325V45H324V72H323H322V69H321V70H320V72H319H318V70H317V63H316V71H315V72H314H313H312H311V63H310V72H309H308H307V67H306V72H305V71H304V60H303V72H302V71H301V72H300H299V62H298V72H297V70H296V66H295V72H294H293H292H291V71H290V72H289H288H287H286V66H285V64H284V67H283V66H282V62H281V72H280H279H278H277V69H276V61H275V72H274V55H273V72H272V67H271V72H270H269H268V53H267V72H266H265H264V67H263V72H262H261V69H260V63H259H258V67H257V59H256V72H255V68H254V72H253H252H251V63H250V54H249V45H248H247V57H246V45H245V68H244V71H243H242V72H241H240H239V70H238V72H237H236H235V67H234V68H233V53H232V72H231H230H229H228H227V70H226V50H225V48H224V72H223V67H222V54H221V64H220V72H219H218H217H216H215H214H213H212H211V70H210V72H209H208H207H206H205V45H204V72H203V65H202V72H201V56H200V72H199H198H197H196H195H194H193H192H191H190H189V69H188V53H187V72H186H185V60H184V71H183V72H182V69H181V55H180V45H179V72H178H177H176V57H175V48H174V72H173V68H172V72H171V55H170V69H169V72H168V64H167V66H166V72H165V67H164V60H163V45H162V62H161V71H160V65H159V72H158V69H157V71H156V67H155V45H154V59H153V70H152V48H151V53H150V72H149H148H147H146V66H145V67H144V72H143V67H142V65H141V47H140V69H139V71H138V72H137V71H136V64H135V67H134V72H133H132V59H131V72H130H129V67H128V72H127H126H125V71H124V63H123V72H122V69H121V65H120V72H119H118V65H117V72H116H115H114H113H112H111H110V65H109V71H108V72H107H106V71H105V72H104H103V60H102V68H101V54H100V55H99V72H98H97V60H96V66H95V72H94V71H93V72H92V70H91V72H90V64H89V71H88V70H87V57H86V53H85V72H84V70H83V61H82V72H81H80H79H78Z" fill="url(#wg)"/><path d="M498 37V22H499V20H500V19H501H502H503V21H504V19H505V15H506V25H507V16H508V25H509V19H510H511V26H512V29H513V26H514V18H515V15H516V14H517V22H518V11H519V23H520V11H521V12H522V22H523V23H524V22H525V27H526V24H527V22H528V27H529V21H530V25H531V20H532V23H533V20H534V22H535V23H536V29H537V25H538V20H539V23H540V21H541V28H542V29H543V19H544V26H545V20H546V16H547V14H548V24H549V19H550V20H551V29H552V22H553V31H554V27H555V30H556V19H557V37V51H556V46H555V50H554V44H553V43H552V46H551V57H550V46H549V55H548V48H547V47H546V49H545V47H544V54H543V47H542H541V46H540V58H539V52H538V54H537H536V48H535V45H534V48H533V47H532V59H531V51H530V48H529V55H528V49H527V52H526V49H525V50H524V56H523V54H522V48H521V49H520V61H519V52H518H517V55H516V56H515V47H514V56H513V50H512V46H511V51H510H509V45H508V55H507V57H506V61H505V63H504V45H503V56H502V50H501V55H500V50H499V56H498Z" fill="url(#wgm)"/><path d="M557 37V7H558V26H559V13H560V2H561V22H562V4H563V2H564V10H565V5H566V3H567V6H568V25H569V2H570H571H572V18H573V2H574H575V4H576V2H577H578V3H579V2H580H581H582H583H584V5H585H586V2H587H588V23H589V2H590V12H591V7H592H593V8H594V11H595V2H596H597V5H598V2H599H600V15H601V5H602V6H603V2H604H605V3H606V2H607V13H608V17H609V2H610V16H611V2H612H613V3H614V2H615V19H616V2H617H618H619H620V24H621V16H622V2H623V18H624V2H625H626H627V4H628V2H629V10H630V2H631H632H633H634V4H635V5H636V3H637V2H638H639H640V6H641V2H642V3H643V4H644V3H645V2H646V15H647V3H648V13H649V2H650V20H651V5H652V2H653V3H654V2H655V14H656V2H657V4H658V18H659V11H660V2H661V4H662V2H663V13H664V3H665V18H666V2H667V14H668V2H669H670V8H671V2H672H673V15H674V12H675V29H676V8H677V2H678H679H680V5H681V25H682V37V49H681V68H680V72H679H678H677H676H675V53H674V72H673H672H671V66H670V72H669H668H667V66H666V72H665V65H664V58H663V72H662H661H660H659H658H657V60H656V53H655V68H654V71H653H652V60H651V63H650V70H649V72H648V71H647V72H646H645V68H644V72H643H642V71H641V72H640H639H638V70H637V68H636V70H635V72H634H633H632H631H630H629H628H627H626H625V64H624V72H623V71H622V72H621V58H620V55H619V72H618V45H617V72H616V62H615V72H614V71H613V72H612V64H611V72H610V64H609V66H608V72H607V52H606V72H605V58H604V57H603V68H602V72H601H600V68H599V72H598V70H597V72H596H595V65H594V66H593V67H592V64H591V62H590V72H589H588H587H586V65H585V72H584H583V48H582V72H581H580H579H578V53H577V72H576H575V65H574V51H573V72H572H571V66H570V72H569V70H568V72H567V51H566V72H565V45H564V72H563H562V64H561V72H560H559H558V71H557Z" fill="url(#wg)"/><path d="M682 37V28H683V30H684V33H685V36H686H687H688H689V24H690V20H691V25H692V36H693V25H694V23H695V19H696H697V25H698V36H699H700V26H701V23H702V26H703V36H704V24H705H706V25H707V28H708V25H709V27H710V36H711V27H712V24H713V21H714V26H715V36H716H717H718H719V26H720V25H721V29H722V31H723V30H724V36H725V30H726V26H727V31H728V36H729H730V24H731H732H733V25H734V22H735V28H736V36H737H738H739V37V38H738H737H736V49H735H734H733V50H732V53H731V50H730V38H729H728V45H727V47H726V45H725V38H724V43H723H722V47H721V48H720V46H719V38H718H717H716H715V50H714V52H713V50H712V51H711V38H710V46H709V51H708V48H707V47H706V55H705V49H704V38H703V47H702V50H701V48H700V38H699H698V51H697V54H696V52H695V56H694V47H693V38H692V47H691V55H690V50H689V38H688H687H686H685V41H684V44H683V46H682Z" fill="url(#wgn)"/><path d="M3 110V110H4H5H6H7H8H9H10H11H12H13H14H15H16V109H17V108H18V105H19V104H20V102H21V98H22V97H23V94H24V106H25V98H26H27V93H28V101H29V92H30V90H31V92H32V105H33V99H34V100H35V96H36H37V106H38V101H39V100H40V105H41V103H42V97H43V96H44V98H45V100H46H47V97H48H49V107H50V98H51V97H52V104H53V98H54V92H55V90H56V91H57V99H58V100H59V94H60V96H61V92H62V103H63V90H64V98H65V93H66V98H67V99H68V94H69V98H70V101H71V106H72V102H73V103H74H75V98H76H77V95H78V110V117H77V123H76V114H75V113H74V119H73V117H72V113H71V115H70V121H69V122H68V121H67V123H66V124H65V123H64V122H63V113H62V125H61V128H60V123H59V122H58V125H57V122H56V114H55V121H54V114H53V121H52V125H51V120H50V122H49V118H48V119H47H46V115H45V120H44V121H43V119H42H41V122H40V114H39V121H38V119H37V121H36V131H35V124H34V117H33V123H32V117H31V130H30V116H29V129H28V117H27V121H26V132H25V120H24V118H23V127H22V124H21V115H20H19V116H18V113H17V111H16V110H15H14H13H12H11H10H9H8H7H6H5H4H3Z" fill="url(#rg)"/><path d="M78 110V78H79V75H80V81H81V75H82H83H84H85H86H87V86H88V75H89V85H90V78H91V85H92V81H93V75H94H95V79H96V75H97V84H98V75H99V88H100V75H101H102V76H103V78H104V75H105H106H107V81H108V75H109V85H110V82H111V80H112V90H113V78H114V77H115V75H116V81H117H118V75H119H120V81H121V75H122H123H124H125H126H127H128V85H129V75H130H131H132H133H134H135V76H136H137V75H138H139H140H141V90H142V75H143V78H144V79H145V77H146V75H147H148V86H149V87H150V75H151V76H152V75H153H154V83H155V75H156V77H157V84H158V75H159V81H160V75H161H162V78H163V75H164V84H165V77H166V75H167H168V76H169V75H170V80H171V75H172V81H173V75H174H175V82H176V75H177H178V80H179V76H180V75H181V80H182V75H183H184V78H185V87H186V78H187H188V86H189V75H190H191V83H192V88H193V75H194H195H196V78H197V75H198H199H200H201V80H202V75H203H204V84H205V75H206V86H207V75H208H209H210H211H212V95H213V75H214H215H216V76H217V77H218V80H219V75H220H221H222V91H223V75H224V77H225V75H226H227H228H229H230H231H232H233V87H234V75H235V81H236H237V76H238V75H239H240V80H241V75H242H243V79H244V75H245H246V77H247V82H248V90H249V75H250V91H251V76H252V75H253H254V91H255V76H256V95H257V76H258V75H259H260H261H262V79H263V75H264V78H265V100H266V79H267V81H268V76H269V75H270H271V90H272V75H273H274H275V78H276V91H277V75H278H279H280H281H282V85H283V79H284V84H285V81H286V75H287H288V79H289V81H290V75H291V87H292V102H293V79H294V75H295V80H296V75H297V83H298V76H299V75H300V76H301V75H302V80H303V75H304H305H306H307V80H308V75H309H310H311V81H312V75H313V79H314V78H315V81H316V78H317V84H318V81H319V102H320V78H321V75H322V102H323V79H324V81H325V87H326V91H327V83H328V94H329V83H330V91H331V90H332V85H333V82H334V90H335V88H336V85H337V75H338V81H339V75H340H341V92H342V75H343V90H344V79H345V82H346V75H347V83H348V75H349V84H350V75H351V76H352V75H353H354H355H356H357H358V76H359V86H360V75H361V77H362V75H363H364H365H366H367V97H368V75H369V102H370V75H371V84H372V75H373V79H374V75H375V79H376V102H377V82H378V75H379H380H381H382V95H383V79H384V92H385V85H386V76H387V78H388V75H389V77H390V78H391V75H392V88H393V75H394V102H395V87H396V91H397V79H398V75H399H400H401V78H402V75H403H404V91H405V75H406H407H408H409H410H411H412H413H414H415V97H416V75H417H418V86H419V91H420V104H421V97H422V83H423V85H424V82H425V84H426V82H427H428V86H429V85H430V83H431V79H432V75H433H434H435H436H437H438H439H440V84H441V80H442V75H443V88H444V76H445V75H446V76H447V75H448H449V87H450V89H451V94H452V86H453V85H454V75H455H456H457V92H458V75H459V77H460V88H461V75H462V77H463V76H464V75H465V80H466V75H467V76H468V77H469V85H470V83H471V76H472V75H473H474V80H475V75H476V92H477V79H478V83H479V80H480V87H481V77H482V79H483V82H484V81H485V83H486V75H487V102H488V84H489V102H490V80H491V75H492V80H493V75H494V83H495V75H496V95H497V96H498V110V122H497V124H496V134H495V140H494V130H493V145H492H491V142H490V123H489V145H488V132H487V118H486V140H485H484V136H483H482V142H481H480V119H479V141H478V136H477V141H476V145H475H474V122H473V130H472V145H471H470H469H468H467V121H466V145H465H464H463V143H462V122H461V145H460H459H458H457H456H455V143H454V132H453H452V133H451V124H450V123H449V145H448V142H447V145H446V137H445V145H444V136H443V145H442H441H440V128H439V125H438V145H437H436H435H434H433H432V138H431V140H430V135H429V137H428V135H427V141H426V139H425V133H424V138H423V131H422V135H421V131H420V140H419V135H418V145H417V142H416V125H415V145H414V141H413H412V145H411V137H410V142H409V145H408H407H406V142H405V145H404H403H402V137H401V145H400H399V141H398V134H397V145H396H395V141H394V134H393V145H392V142H391H390V145H389V129H388V145H387V136H386V126H385V119H384V136H383H382V145H381V141H380V125H379V137H378V131H377V145H376V121H375V145H374V142H373V145H372H371V129H370V118H369V140H368V134H367V145H366H365H364H363H362H361V143H360V145H359H358H357H356V128H355V145H354V136H353V118H352V145H351H350V133H349V145H348H347V118H346V145H345H344V141H343V145H342H341H340V141H339V145H338H337V121H336V128H335V136H334V133H333H332V127H331V136H330V134H329V133H328V135H327V124H326V134H325V133H324V134H323V124H322V145H321V126H320V145H319V143H318V145H317H316H315H314H313H312V143H311V145H310H309V133H308V145H307V142H306V145H305H304H303H302H301H300H299V144H298V145H297H296V131H295V132H294V145H293H292V141H291V144H290V143H289V145H288V143H287V145H286V125H285V141H284V135H283V134H282V144H281V145H280H279V144H278V145H277H276V139H275V145H274H273V142H272V144H271V145H270V144H269V121H268V143H267V136H266V143H265V136H264V124H263V145H262H261H260V138H259H258V124H257V145H256H255H254V143H253V145H252H251V118H250V145H249V139H248V145H247V134H246V145H245V137H244V145H243H242H241H240V144H239V145H238H237H236H235V139H234V145H233H232H231V135H230V145H229H228H227H226H225V141H224V145H223V144H222V141H221H220V123H219V135H218V127H217V142H216V132H215V134H214V145H213V134H212V145H211V143H210V140H209V144H208V137H207V145H206V142H205V143H204V145H203H202H201H200V129H199V140H198V145H197H196V135H195V129H194V145H193H192V138H191V145H190H189V144H188V134H187V122H186V135H185V132H184V145H183V128H182V142H181V145H180H179H178H177V138H176V145H175H174H173H172V144H171V138H170V137H169V145H168H167H166V143H165V142H164V140H163V139H162V135H161V138H160V144H159V139H158V145H157V137H156V138H155V123H154V132H153V145H152H151V136H150V145H149V144H148H147V145H146V132H145V143H144V145H143V140H142V136H141V145H140V118H139V145H138H137H136H135V141H134V145H133V142H132V145H131H130H129H128H127H126H125H124H123H122H121H120V141H119V135H118V126H117V139H116V142H115V141H114V145H113V140H112V145H111H110H109H108H107V140H106V144H105H104V145H103H102H101V122H100V132H99V145H98H97V143H96V141H95V145H94H93H92V138H91V145H90V135H89V145H88V138H87V144H86H85V145H84H83H82V123H81V135H80V145H79V140H78Z" fill="url(#rg)"/><path d="M498 110V97H499V96H500V98H501V97H502V99H503V86H504V94H505V102H506V100H507V98H508V96H509V92H510V95H511V98H512V93H513V91H514V102H515V97H516V91H517H518V86H519V82H520V92H521H522V95H523V96H524V85H525V90H526V94H527V100H528V99H529V95H530V103H531H532V96H533V95H534V88H535V94H536V96H537V98H538V97H539V96H540H541H542V94H543V96H544V97H545V92H546V88H547V96H548V92H549V89H550V92H551V91H552V94H553V92H554V93H555V89H556V97H557V110V128H556V131H555V120H554V133H553V119H552V124H551V128H550V122H549V124H548V129H547V131H546V125H545V126H544V124H543V127H542V122H541V118H540V126H539V118H538V121H537V125H536V134H535V126H534V119H533V128H532V119H531V123H530V119H529V124H528V126H527V127H526H525V124H524V123H523V119H522V129H521V128H520V124H519V126H518V136H517V129H516V118H515V127H514V120H513V121H512V130H511V133H510V118H509V119H508V121H507V128H506V122H505V123H504V132H503V124H502V129H501V123H500V126H499H498Z" fill="url(#rg)"/><path d="M557 110V81H558V75H559H560V79H561H562V75H563H564H565H566H567V80H568V77H569V84H570V75H571H572H573H574H575V85H576V79H577V88H578V82H579V75H580V85H581V78H582V77H583V75H584H585H586V82H587V75H588V81H589V83H590V88H591V85H592V80H593V88H594V81H595V75H596V95H597V75H598H599H600H601H602H603H604H605H606V81H607V75H608H609H610H611H612H613V78H614V75H615V84H616V92H617V77H618V75H619H620H621H622V84H623V75H624H625V96H626V75H627H628H629H630H631V80H632V75H633H634H635H636H637H638H639H640H641H642H643H644H645V102H646V75H647V78H648V75H649V82H650V77H651V102H652V75H653H654V89H655V75H656H657V76H658V75H659V82H660V75H661V78H662H663V75H664H665H666V77H667V75H668H669V80H670H671V75H672H673V77H674V83H675V75H676V93H677V102H678V89H679V75H680V78H681V98H682V110V122H681V145H680H679H678H677V135H676V139H675V123H674V142H673V145H672H671H670V140H669V145H668H667V127H666V139H665V143H664V145H663V140H662V145H661H660H659V134H658V145H657H656H655H654H653V138H652V120H651V135H650V145H649H648H647V128H646V145H645V139H644V145H643H642H641V143H640V145H639H638H637V140H636V145H635H634H633H632V141H631V145H630H629V135H628V145H627H626H625H624V138H623V144H622V145H621V141H620H619V145H618V130H617V134H616V145H615H614V141H613V138H612V145H611V138H610V145H609V118H608V133H607V145H606H605V132H604V140H603V145H602V137H601V139H600V145H599V129H598V145H597V139H596V144H595V141H594V129H593V138H592V140H591V130H590V145H589H588H587H586V143H585H584V141H583V118H582V145H581V135H580V132H579V125H578V138H577V142H576V145H575H574H573V127H572V138H571V142H570V145H569H568V138H567V145H566H565V118H564V144H563V124H562V128H561V144H560V145H559H558V138H557Z" fill="url(#rg)"/><path d="M682 110V101H683V103H684V106H685V109H686H687H688H689V101H690V93H691V97H692V109H693V99H694V93H695V91H696H697V99H698V109H699H700V99H701H702V101H703V109H704V100H705V95H706V100H707V98H708V94H709V98H710V109H711V98H712V96H713V97H714V99H715V109H716H717H718H719V102H720V99H721V102H722V104H723H724V109H725V101H726H727V104H728V109H729H730V100H731V95H732V97H733V99H734H735V100H736V109H737H738H739V110V111H738H737H736V121H735V124H734V121H733V124H732H731V123H730V111H729H728V117H727V121H726V118H725V111H724V118H723H722V121H721V123H720V120H719V111H718H717H716H715V121H714V125H713H712V119H711V111H710V121H709V125H708V121H707V123H706V128H705V123H704V111H703V119H702V121H701V120H700V111H699H698V120H697V124H696V129H695V125H694V124H693V111H692V122H691V123H690V121H689V111H688H687H686H685V114H684V117H683V119H682Z" fill="url(#rg)"/><path d="M3 37.5H740" stroke="#b4b4b4" stroke-width="1" stroke-dasharray="4 3" opacity="0.55"/><path d="M3 110.5H740" stroke="#e8d0d0" stroke-width="1" stroke-dasharray="4 3"/><rect x="2" y="72" width="738" height="3" fill="#8a8a8a"/><rect x="2" y="73" width="738" height="1" fill="#2c2c2c"/><rect x="2" y="2" width="1.4" height="144" fill="#22a4ff"/><rect x="2" y="54" width="4.5" height="39" fill="#1c8cf0" opacity="0.95"/><rect x="738.6" y="2" width="1.4" height="144" fill="#22a4ff"/><rect x="736" y="54" width="4" height="39" fill="#1c8cf0"/><path d="M3.5 4h2M3.5 8h2M3.5 12h2M3.5 16h2M3.5 20h2M3.5 24h2M3.5 28h2M3.5 32h2M3.5 36h2M3.5 40h2M3.5 44h2M3.5 48h2M3.5 52h2M3.5 56h2M3.5 60h2M3.5 64h2M3.5 68h2M3.5 72h2M3.5 76h2M3.5 80h2M3.5 84h2M3.5 88h2M3.5 92h2M3.5 96h2M3.5 100h2M3.5 104h2M3.5 108h2M3.5 112h2M3.5 116h2M3.5 120h2M3.5 124h2M3.5 128h2M3.5 132h2M3.5 136h2M3.5 140h2M3.5 144h2" stroke="#c8d8ff" stroke-width="1" opacity="0.3"/><rect x="52" y="2" width="1" height="144" fill="#b8ffb8"/><path d="M46.5 66.5L64 74.5L46.5 82.5Z" fill="url(#pt)" stroke="#20ff20" stroke-width="1.2"/><text x="8" y="14" font-family="Liberation Sans,sans-serif" font-size="11.5" fill="#c4c4c4">1</text><text x="8" y="50" font-family="Liberation Sans,sans-serif" font-size="11.5" fill="#c4c4c4">0</text><text x="8" y="87" font-family="Liberation Sans,sans-serif" font-size="11.5" fill="#c4c4c4">1</text><text x="8" y="123" font-family="Liberation Sans,sans-serif" font-size="11.5" fill="#c4c4c4">0</text><rect x="2" y="146" width="738" height="2" fill="#e8e8e8"/><rect x="2" y="148" width="738" height="10.5" fill="#000"/><path d="M2.5 148V163M33.5 148V163M64.5 148V163M95.5 148V163M126.5 148V163M156.5 148V163M187.5 148V163M218.5 148V163M249.5 148V163M280.5 148V163M310.5 148V163M341.5 148V163M372.5 148V163M403.5 148V163M434.5 148V163M464.5 148V163M495.5 148V163M526.5 148V163M557.5 148V163M588.5 148V163M618.5 148V163M649.5 148V163M680.5 148V163M711.5 148V163" stroke="#c4c4c4" stroke-width="1" fill="none"/><path d="M9.5 159.3v2M15.5 159.3v2M21.5 159.3v2M27.5 159.3v2M39.5 159.3v2M46.5 159.3v2M52.5 159.3v2M58.5 159.3v2M70.5 159.3v2M76.5 159.3v2M83.5 159.3v2M89.5 159.3v2M101.5 159.3v2M107.5 159.3v2M113.5 159.3v2M120.5 159.3v2M132.5 159.3v2M138.5 159.3v2M144.5 159.3v2M150.5 159.3v2M163.5 159.3v2M169.5 159.3v2M175.5 159.3v2M181.5 159.3v2M193.5 159.3v2M200.5 159.3v2M206.5 159.3v2M212.5 159.3v2M224.5 159.3v2M230.5 159.3v2M237.5 159.3v2M243.5 159.3v2M255.5 159.3v2M261.5 159.3v2M267.5 159.3v2M273.5 159.3v2M286.5 159.3v2M292.5 159.3v2M298.5 159.3v2M304.5 159.3v2M317.5 159.3v2M323.5 159.3v2M329.5 159.3v2M335.5 159.3v2M347.5 159.3v2M354.5 159.3v2M360.5 159.3v2M366.5 159.3v2M378.5 159.3v2M384.5 159.3v2M390.5 159.3v2M397.5 159.3v2M409.5 159.3v2M415.5 159.3v2M421.5 159.3v2M427.5 159.3v2M440.5 159.3v2M446.5 159.3v2M452.5 159.3v2M458.5 159.3v2M471.5 159.3v2M477.5 159.3v2M483.5 159.3v2M489.5 159.3v2M501.5 159.3v2M507.5 159.3v2M514.5 159.3v2M520.5 159.3v2M532.5 159.3v2M538.5 159.3v2M544.5 159.3v2M551.5 159.3v2M563.5 159.3v2M569.5 159.3v2M575.5 159.3v2M581.5 159.3v2M594.5 159.3v2M600.5 159.3v2M606.5 159.3v2M612.5 159.3v2M624.5 159.3v2M631.5 159.3v2M637.5 159.3v2M643.5 159.3v2M655.5 159.3v2M661.5 159.3v2M668.5 159.3v2M674.5 159.3v2M686.5 159.3v2M692.5 159.3v2M698.5 159.3v2M705.5 159.3v2M717.5 159.3v2M723.5 159.3v2M729.5 159.3v2M735.5 159.3v2" stroke="#d0d0d0" stroke-width="1.2" fill="none"/><path d="M0 1H742M1 0V181" stroke="#808080" stroke-width="2" fill="none"/><path d="M741 0V181M0 180H742" stroke="#fff" stroke-width="2" fill="none"/></svg>
<div class="tl" style="left:18.5px;top:414.5px">0:00</div>
<div class="tl" style="left:80.1px;top:414.5px">0:20</div>
<div class="tl" style="left:141.7px;top:414.5px">0:40</div>
<div class="tl" style="left:203.2px;top:414.5px">1:00</div>
<div class="tl" style="left:264.8px;top:414.5px">1:20</div>
<div class="tl" style="left:326.4px;top:414.5px">1:40</div>
<div class="tl" style="left:388.0px;top:414.5px">2:00</div>
<div class="tl" style="left:449.6px;top:414.5px">2:20</div>
<div class="tl" style="left:511.1px;top:414.5px">2:40</div>
<div class="tl" style="left:572.7px;top:414.5px">3:00</div>
<div class="tl" style="left:634.3px;top:414.5px">3:20</div>
<div class="tl" style="left:695.9px;top:414.5px">3:40</div>
<svg class="i" style="left:14px;top:435px" width="742" height="65" viewBox="0 0 742 65" ><defs><linearGradient id="fl" x1="0" y1="0" x2="1" y2="0"><stop offset="0" stop-color="#8080d8" stop-opacity="0.95"/><stop offset="1" stop-color="#8080d8" stop-opacity="0"/></linearGradient><linearGradient id="fr" x1="1" y1="0" x2="0" y2="0"><stop offset="0" stop-color="#8080d8" stop-opacity="0.95"/><stop offset="1" stop-color="#8080d8" stop-opacity="0"/></linearGradient></defs><rect x="0" y="0" width="742" height="65" fill="#1c1c1c"/><rect x="2" y="2" width="738" height="46" fill="#26269c"/><path d="M33.5 2V48M64.5 2V48M95.5 2V48M126.5 2V48M156.5 2V48M187.5 2V48M218.5 2V48M249.5 2V48M280.5 2V48M310.5 2V48M341.5 2V48M372.5 2V48M403.5 2V48M434.5 2V48M464.5 2V48M495.5 2V48M526.5 2V48M557.5 2V48M588.5 2V48M618.5 2V48M649.5 2V48M680.5 2V48M711.5 2V48" stroke="#8c8cb0" stroke-width="1" fill="none"/><rect x="6" y="12.5" width="730" height="1" fill="#fff"/><rect x="6" y="36" width="730" height="1" fill="#ff2020"/><path d="M3 13V13H4H5H6H7H8H9H10H11H12H13H14H15H16H17V11H18V12H19V11H20V8H21H22V11H23H24V5H25V6H26V9H27V5H28V8H29V9H30V10H31V7H32V12H33V10H34V11H35V9H36V8H37H38V7H39V9H40V11H41H42H43V12H44V11H45H46H47V9H48V12H49V8H50V11H51H52H53V10H54V11H55H56V8H57H58V9H59V8H60V12H61V10H62V9H63V10H64H65V8H66V9H67V6H68H69V8H70V12H71V11H72H73H74V10H75V9H76V11H77V7H78V2H79H80V3H81V4H82H83V7H84V9H85V2H86H87H88H89V11H90V2H91V3H92V2H93H94H95H96H97H98H99V3H100V2H101V10H102V3H103V4H104V2H105H106V4H107V2H108H109H110H111H112H113H114H115H116H117H118H119H120H121H122V7H123V3H124V2H125H126V5H127V4H128V2H129H130V5H131V2H132H133H134H135V4H136V2H137H138V3H139V2H140V8H141V5H142V8H143V9H144V4H145V2H146H147V3H148H149V2H150V3H151H152V5H153V11H154V6H155V4H156V7H157V2H158V3H159V7H160V2H161V3H162V2H163H164V3H165V2H166V4H167V2H168V3H169V2H170V3H171V2H172V3H173V2H174H175V3H176V2H177V6H178V5H179V2H180H181H182H183H184H185H186V3H187V6H188V2H189H190H191H192H193V5H194V2H195H196V3H197V2H198H199H200V6H201V2H202H203V3H204V2H205V3H206V2H207H208V4H209V2H210H211H212H213H214H215H216V7H217V2H218H219V3H220V9H221V4H222V5H223V11H224V7H225V2H226H227H228H229V4H230V2H231H232V8H233V3H234V2H235H236H237V3H238V2H239H240H241V3H242H243V2H244V3H245V2H246H247V7H248V3H249V2H250V3H251V2H252V3H253V2H254H255H256H257H258V3H259V9H260V4H261H262V2H263V3H264V2H265H266V3H267V2H268V6H269V2H270H271H272H273H274H275H276H277V5H278V2H279H280H281H282V4H283V7H284V3H285V5H286V2H287H288V3H289V2H290H291V3H292V2H293H294V3H295H296V2H297V9H298V2H299V11H300V2H301V7H302V3H303V6H304H305V2H306V3H307V2H308H309H310H311H312V7H313V2H314H315H316H317H318H319V3H320V2H321H322H323H324H325V6H326V5H327H328H329V4H330V6H331V4H332V5H333H334V8H335V10H336V6H337V8H338V2H339V3H340H341V6H342V2H343H344V3H345V2H346H347H348H349H350V5H351V2H352H353V7H354V6H355V2H356V4H357V2H358H359V3H360V2H361H362H363H364H365H366V4H367H368V2H369H370V4H371V2H372H373H374H375H376V3H377V2H378H379H380V3H381V2H382V4H383H384V3H385V5H386V9H387V11H388V2H389H390V7H391V2H392H393H394H395V3H396V2H397V4H398H399V2H400H401V5H402V3H403V7H404V3H405V2H406H407V6H408H409V5H410V2H411H412V3H413V2H414H415H416H417H418V4H419V5H420H421V4H422H423V5H424H425H426V6H427V3H428V5H429V9H430V8H431V5H432V7H433V2H434H435H436H437V7H438V8H439V3H440H441V10H442V2H443H444H445H446H447V3H448V2H449V5H450V6H451V5H452V6H453H454V2H455H456H457H458H459H460V3H461V4H462V2H463H464H465V4H466V2H467H468V3H469V2H470H471H472H473H474H475H476H477V4H478V3H479V5H480V4H481H482V7H483V3H484V5H485V3H486V2H487H488H489V11H490V7H491V2H492V7H493V2H494H495V5H496V9H497V8H498H499H500V7H501H502H503V8H504V7H505V6H506V9H507V6H508V9H509V7H510H511V9H512V10H513V9H514V7H515V6H516H517V8H518V5H519V8H520V5H521H522V8H523V9H524V8H525V10H526V9H527V8H528V10H529V8H530V9H531V8H532V9H533V8H534H535V9H536V11H537V9H538V8H539V9H540V8H541V10H542H543V7H544V10H545V8H546V6H547H548V9H549V7H550V8H551V10H552V8H553V11H554V10H555V11H556V7H557V4H558V10H559V6H560V2H561V8H562V3H563V2H564V5H565V3H566V2H567V3H568V9H569V2H570H571H572V7H573V2H574H575V3H576V2H577H578H579H580H581H582H583H584V3H585H586V2H587H588V9H589V2H590V5H591V4H592V3H593V4H594V5H595V2H596H597V3H598V2H599H600V6H601V3H602H603V2H604H605H606H607V5H608V7H609V2H610V6H611V2H612H613H614H615V7H616V2H617H618H619H620V9H621V6H622V2H623V7H624V2H625H626H627V3H628V2H629V5H630V2H631H632H633H634V3H635H636V2H637H638H639H640V3H641V2H642H643V3H644V2H645H646V6H647V2H648V5H649V2H650V8H651V3H652V2H653H654H655V6H656V2H657V3H658V7H659V5H660V2H661V3H662V2H663V6H664V2H665V7H666V2H667V6H668V2H669H670V4H671V2H672H673V6H674V5H675V11H676V4H677V2H678H679H680V3H681V9H682V10H683V11H684V12H685V13H686H687H688H689V9H690V8H691V9H692V13H693V9H694H695V7H696H697V9H698V13H699H700V10H701V9H702V10H703V13H704V9H705H706H707V10H708V9H709V10H710V13H711V10H712V9H713V8H714V9H715V13H716H717H718H719V10H720V9H721V10H722V11H723H724V13H725V11H726V10H727V11H728V13H729H730V9H731H732H733H734V8H735V10H736V13H737H738H739V13V13H738H737H736V17H735H734H733H732V18H731V17H730V13H729H728V15H727V16H726V15H725V13H724V15H723H722V16H721H720H719V13H718H717H716H715V17H714V18H713V17H712H711V13H710V16H709V17H708V16H707H706V19H705V17H704V13H703V16H702V17H701V16H700V13H699H698V17H697V18H696H695V19H694V16H693V13H692V16H691V19H690V17H689V13H688H687H686H685V14H684V15H683V16H682V17H681V23H680V24H679H678H677H676H675V18H674V24H673H672H671V22H670V24H669H668H667V22H666V24H665V22H664V20H663V24H662H661H660H659H658H657V20H656V18H655V23H654V24H653H652V20H651V21H650V23H649V24H648H647H646H645V23H644V24H643H642H641H640H639H638V23H637H636H635V24H634H633H632H631H630H629H628H627H626H625V21H624V24H623H622H621V20H620V19H619V24H618V15H617V24H616V21H615V24H614H613H612V22H611V24H610V22H609H608V24H607V18H606V24H605V20H604V19H603V23H602V24H601H600V23H599V24H598V23H597V24H596H595V22H594H593H592V21H591H590V24H589H588H587H586V22H585V24H584H583V16H582V24H581H580H579H578V18H577V24H576H575V22H574V17H573V24H572H571V22H570V24H569V23H568V24H567V17H566V24H565V15H564V24H563H562V21H561V24H560H559H558H557V17H556V16H555V17H554V15H553H552V16H551V19H550V16H549V19H548V17H547V16H546V17H545V16H544V18H543V16H542H541H540V19H539V18H538H537H536V16H535V15H534V17H533V16H532V20H531V17H530V16H529V19H528V17H527V18H526V17H525H524V19H523V18H522V16H521V17H520V20H519V18H518H517V19H516H515V16H514V19H513V17H512V16H511V17H510H509V16H508V19H507H506V21H505H504V16H503V19H502V17H501V19H500V17H499V19H498V18H497V19H496V20H495V24H494H493V18H492V23H491V24H490V22H489V23H488V24H487H486V23H485V21H484V20H483V22H482V19H481V21H480V22H479H478H477V24H476H475H474V21H473V20H472V23H471H470V24H469V23H468V24H467V22H466V24H465H464V22H463V24H462H461V22H460V24H459H458V23H457H456V24H455H454V20H453H452V21H451V17H450V20H449V24H448H447H446H445V21H444V24H443V21H442V23H441V19H440V23H439V21H438V23H437V20H436H435V23H434V24H433H432V19H431V17H430V22H429V20H428V21H427H426V19H425V21H424H423H422V22H421H420V17H419V22H418V23H417V24H416V21H415V24H414H413H412H411H410V19H409V24H408V23H407V20H406V24H405V22H404V24H403H402V22H401V24H400H399H398V21H397V23H396V18H395V24H394H393V23H392V22H391H390V24H389H388V22H387V23H386V22H385V18H384V21H383V22H382V24H381H380V23H379V22H378V24H377H376H375H374H373V21H372V24H371H370H369H368V19H367V24H366H365V23H364V24H363H362H361H360H359H358V20H357V23H356V24H355H354V19H353V22H352V23H351V24H350V23H349V24H348H347H346H345H344V20H343V24H342H341V20H340V23H339V21H338V24H337V22H336V20H335V22H334V21H333V22H332V20H331V22H330H329H328V16H327V21H326V22H325V15H324V24H323H322V23H321H320V24H319H318V23H317V21H316V24H315H314H313H312H311V21H310V24H309H308H307V22H306V24H305H304V20H303V24H302H301H300H299V21H298V24H297V23H296V22H295V24H294H293H292H291H290H289H288H287H286V22H285H284V23H283V22H282V21H281V24H280H279H278H277V23H276V21H275V24H274V19H273V24H272V22H271V24H270H269H268V18H267V24H266H265H264V22H263V24H262H261V23H260V21H259H258V22H257V20H256V24H255V23H254V24H253H252H251V21H250V18H249V15H248H247V19H246V15H245V23H244V24H243H242H241H240H239V23H238V24H237H236H235V22H234V23H233V18H232V24H231H230H229H228H227V23H226V17H225H224V24H223V22H222V18H221V22H220V24H219H218H217H216H215H214H213H212H211V23H210V24H209H208H207H206H205V15H204V24H203V22H202V24H201V19H200V24H199H198H197H196H195H194H193H192H191H190H189V23H188V18H187V24H186H185V20H184V24H183H182V23H181V19H180V16H179V24H178H177H176V19H175V16H174V24H173V23H172V24H171V19H170V23H169V24H168V22H167H166V24H165V22H164V20H163V15H162V21H161V24H160V22H159V24H158V23H157V24H156V22H155V15H154V20H153V23H152V16H151V18H150V24H149H148H147H146V22H145H144V24H143V22H142H141V16H140V23H139V24H138H137H136V22H135V23H134V24H133H132V20H131V24H130H129V23H128V24H127H126H125H124V21H123V24H122V23H121V22H120V24H119H118V22H117V24H116H115H114H113H112H111H110V22H109V24H108H107H106H105H104H103V20H102V23H101V18H100V19H99V24H98H97V20H96V22H95V24H94H93H92V23H91V24H90V21H89V24H88V23H87V19H86V18H85V24H84V23H83V21H82V24H81H80H79H78V16H77H76V15H75V14H74V15H73H72H71H70V19H69V18H68V20H67V17H66V19H65H64H63V15H62V16H61H60V15H59V16H58H57H56V14H55V17H54V18H53V17H52V15H51V17H50V15H49H48V16H47V17H46V16H45H44V14H43H42V16H41H40V14H39V18H38V16H37V17H36V18H35V16H34V20H33V16H32V19H31V16H30V17H29V18H28V19H27V17H26V18H25V20H24V17H23V20H22V18H21V15H20H19V14H18H17H16V13H15H14H13H12H11H10H9H8H7H6H5H4H3Z" fill="#fff"/><path d="M3 36.5V36H4H5H6H7H8H9H10H11H12H13H14H15H16H17H18V35H19H20V34H21V33H22H23V32H24V35H25V33H26H27V31H28V34H29V31H30V30H31V31H32V35H33V33H34H35V32H36H37V35H38V34H39V33H40V35H41V34H42V32H43H44V33H45H46H47V32H48H49V36H50V33H51V32H52V35H53V33H54V31H55V30H56V31H57V33H58H59V31H60V32H61V31H62V34H63V30H64V33H65V31H66V33H67H68V31H69V33H70V34H71V35H72V34H73H74H75V33H76H77V32H78V27H79V26H80V28H81V26H82H83H84H85H86H87V29H88V26H89V28H90V26H91V29H92V27H93V26H94H95V27H96V26H97V28H98V26H99V29H100V26H101H102H103H104H105H106H107V27H108V26H109V28H110H111V27H112V30H113V26H114H115H116V27H117H118V26H119H120V27H121V26H122H123H124H125H126H127H128V29H129V26H130H131H132H133H134H135H136H137H138H139H140H141V30H142V26H143H144V27H145V26H146H147H148V29H149H150V26H151H152H153H154V28H155V26H156H157V28H158V26H159V27H160V26H161H162H163H164V28H165V26H166H167H168H169H170V27H171V26H172V27H173V26H174H175V28H176V26H177H178V27H179V26H180H181V27H182V26H183H184H185V29H186V26H187H188V29H189V26H190H191V28H192V30H193V26H194H195H196H197H198H199H200H201V27H202V26H203H204V28H205V26H206V29H207V26H208H209H210H211H212V32H213V26H214H215H216H217H218V27H219V26H220H221H222V31H223V26H224H225H226H227H228H229H230H231H232H233V29H234V26H235V28H236V27H237V26H238H239H240V27H241V26H242H243V27H244V26H245H246H247V28H248V30H249V26H250V31H251V26H252H253H254V31H255V26H256V32H257V26H258H259H260H261H262V27H263V26H264H265V33H266V27H267H268V26H269H270H271V30H272V26H273H274H275H276V31H277V26H278H279H280H281H282V29H283V27H284V28H285V27H286V26H287H288V27H289H290V26H291V29H292V34H293V27H294V26H295V27H296V26H297V28H298V26H299H300H301H302V27H303V26H304H305H306H307V27H308V26H309H310H311V28H312V26H313V27H314V26H315V27H316V26H317V28H318V27H319V34H320V27H321V26H322V34H323V27H324H325V29H326V30H327V28H328V31H329V28H330V31H331V30H332V29H333V28H334V30H335H336V29H337V26H338V27H339V26H340H341V31H342V26H343V30H344V27H345V28H346V26H347V28H348V26H349V28H350V26H351H352H353H354H355H356H357H358H359V29H360V26H361H362H363H364H365H366H367V32H368V26H369V34H370V26H371V28H372V26H373V27H374V26H375V27H376V34H377V28H378V26H379H380H381H382V32H383V27H384V31H385V29H386V26H387V27H388V26H389H390H391H392V30H393V26H394V34H395V29H396V30H397V27H398V26H399H400H401V27H402V26H403H404V31H405V26H406H407H408H409H410H411H412H413H414H415V32H416V26H417H418V29H419V30H420V35H421V32H422V28H423V29H424V28H425H426H427H428V29H429H430V28H431V27H432V26H433H434H435H436H437H438H439H440V28H441V27H442V26H443V30H444V26H445H446H447H448H449V29H450V30H451V32H452V29H453H454V26H455H456H457V31H458V26H459H460V30H461V26H462H463H464H465V27H466V26H467H468H469V29H470V28H471V26H472H473H474V27H475V26H476V31H477V27H478V28H479V27H480V29H481V26H482V27H483V28H484V27H485V28H486V26H487V34H488V28H489V34H490V27H491V26H492V27H493V26H494V28H495V26H496V32H497H498H499H500V33H501V32H502V33H503V29H504V31H505V34H506H507V33H508V32H509V31H510V32H511V33H512V31H513V30H514V34H515V32H516V31H517H518V29H519V28H520V31H521H522V32H523H524V29H525V30H526V32H527V33H528H529V32H530V34H531H532V32H533H534V29H535V31H536V32H537V33H538V32H539H540H541H542V31H543V32H544H545V31H546V30H547V32H548V31H549V30H550V31H551H552V32H553V31H554H555V30H556V32H557V28H558V26H559H560V27H561H562V26H563H564H565H566H567V27H568V26H569V28H570V26H571H572H573H574H575V29H576V27H577V30H578V28H579V26H580V29H581V27H582V26H583H584H585H586V28H587V26H588V27H589V28H590V30H591V29H592V27H593V30H594V27H595V26H596V32H597V26H598H599H600H601H602H603H604H605H606V27H607V26H608H609H610H611H612H613V27H614V26H615V28H616V31H617V26H618H619H620H621H622V28H623V26H624H625V32H626V26H627H628H629H630H631V27H632V26H633H634H635H636H637H638H639H640H641H642H643H644H645V34H646V26H647H648H649V28H650V26H651V34H652V26H653H654V30H655V26H656H657H658H659V28H660V26H661V27H662V26H663H664H665H666H667H668H669V27H670H671V26H672H673H674V28H675V26H676V31H677V34H678V30H679V26H680H681V33H682V34H683H684V35H685V36H686H687H688H689V34H690V31H691V32H692V36H693V33H694V31H695H696H697V33H698V36H699H700V33H701H702V34H703V36H704V33H705V32H706V33H707H708V31H709V33H710V36H711V33H712V32H713V33H714H715V36H716H717H718H719V34H720V33H721V34H722H723V35H724V36H725V34H726H727V35H728V36H729H730V33H731V32H732H733V33H734H735H736V36H737H738H739V36.5V37H738H737H736V40H735V41H734V40H733V41H732H731V40H730V37H729H728V39H727V40H726V39H725V37H724V39H723H722V40H721H720H719V37H718H717H716H715V40H714V41H713H712V39H711V37H710V40H709V41H708V40H707V41H706V42H705V41H704V37H703V39H702V40H701H700V37H699H698V40H697V41H696V42H695V41H694H693V37H692V40H691V41H690V40H689V37H688H687H686H685V38H684V39H683H682V40H681V48H680H679H678H677V44H676V46H675V40H674V46H673V48H672H671H670V46H669V48H668H667V42H666V45H665V47H664V48H663V46H662V48H661H660H659V44H658V48H657H656H655H654H653V45H652V40H651V44H650V48H649H648H647V42H646V48H645V46H644V48H643V47H642V48H641V47H640V48H639H638H637V46H636V48H635H634H633H632V46H631V48H630H629V44H628V48H627H626H625H624V45H623V47H622V48H621V46H620H619V48H618V43H617V44H616V48H615H614V46H613V45H612V48H611V45H610V48H609V39H608V44H607V48H606H605V43H604V46H603V48H602V45H601V46H600V48H599V42H598V48H597V46H596V47H595V46H594V43H593V45H592V46H591V43H590V48H589H588H587H586V47H585H584V46H583V39H582V48H581V44H580V43H579V41H578V45H577V46H576V48H575H574H573V42H572V45H571V47H570V48H569H568V45H567V48H566H565V39H564V47H563V41H562V42H561V47H560V48H559H558V45H557V42H556V43H555V40H554V44H553V39H552V41H551V42H550V40H549V41H548V43H547H546V41H545H544H543V42H542V40H541V39H540V42H539V39H538V40H537V41H536V44H535V42H534V39H533V42H532V39H531V41H530V39H529V41H528V42H527H526H525V41H524H523V39H522V42H521H520V41H519H518V45H517V43H516V39H515V42H514V40H513H512V43H511V44H510V39H509H508V40H507V42H506V40H505V41H504V43H503V41H502V42H501V41H500H499H498V40H497V41H496V44H495V46H494V43H493V48H492H491V47H490V41H489V48H488V43H487V39H486V46H485H484V45H483H482V47H481H480V39H479V46H478V45H477V46H476V48H475H474V40H473V43H472V48H471H470H469H468H467V40H466V48H465H464H463V47H462V40H461V48H460H459H458H457H456H455V47H454V43H453H452V44H451V41H450H449V48H448V46H447V48H446V45H445V48H444V45H443V48H442H441H440V42H439V41H438V48H437H436H435H434H433H432V45H431V46H430V44H429V45H428V44H427V46H426H425V44H424V45H423V43H422V44H421V43H420V46H419V44H418V48H417V46H416V41H415V48H414V46H413H412V47H411V45H410V46H409V47H408V48H407H406V47H405V48H404H403H402V45H401V48H400H399V46H398V44H397V48H396H395V46H394V44H393V48H392V47H391V46H390V48H389V42H388V48H387V45H386V42H385V39H384V45H383H382V48H381V46H380V41H379V45H378V43H377V48H376V40H375V48H374V47H373V48H372H371V43H370V39H369V46H368V44H367V48H366H365H364H363H362H361V47H360V48H359H358H357H356V42H355V48H354V45H353V39H352V48H351V47H350V44H349V48H348H347V39H346V48H345V47H344V46H343V48H342H341H340V46H339V48H338H337V40H336V42H335V45H334V44H333H332V42H331V45H330V44H329H328H327V41H326V44H325H324H323V41H322V48H321V42H320V48H319V47H318V48H317H316H315H314H313H312V47H311V48H310H309V44H308V48H307V47H306V48H305H304H303H302H301H300H299V47H298V48H297H296V43H295H294V48H293H292V46H291V47H290H289V48H288V47H287V48H286V41H285V46H284V44H283H282V47H281V48H280H279V47H278V48H277H276V46H275V48H274V47H273H272H271V48H270V47H269V40H268V47H267V45H266V47H265V45H264V41H263V48H262H261H260V45H259H258V41H257V48H256H255H254V47H253V48H252H251V39H250V48H249V46H248V48H247V44H246V48H245V45H244V48H243H242H241H240V47H239V48H238H237H236H235V46H234V47H233V48H232H231V44H230V48H229H228H227H226H225V46H224V48H223V47H222V46H221H220V41H219V44H218V42H217V47H216V43H215V44H214V48H213V44H212V48H211V47H210V46H209V47H208V45H207V48H206V47H205H204V48H203H202H201H200V42H199V46H198V48H197H196V44H195V42H194V48H193H192V45H191V48H190H189V47H188V44H187V40H186V44H185V43H184V48H183V42H182V47H181V48H180H179H178H177V45H176V48H175H174H173H172V47H171V45H170H169V48H168H167H166V47H165H164V46H163H162V44H161V45H160V47H159V46H158V48H157V45H156H155V41H154V43H153V47H152V48H151V45H150V48H149V47H148H147V48H146V43H145V47H144V48H143V46H142V45H141V48H140V39H139V48H138H137H136H135V46H134V48H133V47H132V48H131H130H129H128H127H126H125H124V47H123V48H122H121H120V46H119V44H118V41H117V46H116V47H115V46H114V48H113V46H112V48H111H110H109H108H107V46H106V47H105H104V48H103V47H102V48H101V40H100V43H99V48H98H97V47H96V46H95V48H94H93H92V45H91V48H90V44H89V48H88V45H87V47H86H85V48H84H83H82V41H81V44H80V48H79V46H78V39H77V41H76V38H75H74V39H73H72V37H71V38H70V40H69H68H67V41H66H65H64V40H63V38H62V41H61V42H60V40H59H58V41H57V40H56V38H55V40H54V38H53V40H52V41H51V40H50H49V39H48H47H46V38H45V40H44H43V39H42H41V40H40V38H39V40H38V39H37V40H36V43H35V41H34V39H33V41H32V39H31V43H30V38H29V42H28V39H27V40H26V43H25V40H24V39H23V42H22V41H21V38H20H19H18H17V37H16H15H14H13H12H11H10H9H8H7H6H5H4H3Z" fill="#ff2020"/><rect x="2" y="24" width="738" height="1.2" fill="#50506a"/><rect x="6" y="2" width="10" height="46" fill="url(#fl)"/><rect x="726" y="2" width="10" height="46" fill="url(#fr)"/><rect x="2" y="2" width="4" height="46" fill="#22a8f8"/><rect x="736" y="2" width="4" height="46" fill="#22a8f8"/><rect x="52" y="2" width="1" height="46" fill="#b8ffb8"/><path d="M46.5 17.5L63 25.5L46.5 33.5Z" fill="url(#pt)" stroke="#20ff20" stroke-width="1.2"/><path d="M2.5 48V54.5M33.5 48V54.5M64.5 48V54.5M95.5 48V54.5M126.5 48V54.5M156.5 48V54.5M187.5 48V54.5M218.5 48V54.5M249.5 48V54.5M280.5 48V54.5M310.5 48V54.5M341.5 48V54.5M372.5 48V54.5M403.5 48V54.5M434.5 48V54.5M464.5 48V54.5M495.5 48V54.5M526.5 48V54.5M557.5 48V54.5M588.5 48V54.5M618.5 48V54.5M649.5 48V54.5M680.5 48V54.5M711.5 48V54.5" stroke="#d0d0d0" stroke-width="1" fill="none"/><path d="M9.5 48v2.5M15.5 48v2.5M21.5 48v2.5M27.5 48v2.5M39.5 48v2.5M46.5 48v2.5M52.5 48v2.5M58.5 48v2.5M70.5 48v2.5M76.5 48v2.5M83.5 48v2.5M89.5 48v2.5M101.5 48v2.5M107.5 48v2.5M113.5 48v2.5M120.5 48v2.5M132.5 48v2.5M138.5 48v2.5M144.5 48v2.5M150.5 48v2.5M163.5 48v2.5M169.5 48v2.5M175.5 48v2.5M181.5 48v2.5M193.5 48v2.5M200.5 48v2.5M206.5 48v2.5M212.5 48v2.5M224.5 48v2.5M230.5 48v2.5M237.5 48v2.5M243.5 48v2.5M255.5 48v2.5M261.5 48v2.5M267.5 48v2.5M273.5 48v2.5M286.5 48v2.5M292.5 48v2.5M298.5 48v2.5M304.5 48v2.5M317.5 48v2.5M323.5 48v2.5M329.5 48v2.5M335.5 48v2.5M347.5 48v2.5M354.5 48v2.5M360.5 48v2.5M366.5 48v2.5M378.5 48v2.5M384.5 48v2.5M390.5 48v2.5M397.5 48v2.5M409.5 48v2.5M415.5 48v2.5M421.5 48v2.5M427.5 48v2.5M440.5 48v2.5M446.5 48v2.5M452.5 48v2.5M458.5 48v2.5M471.5 48v2.5M477.5 48v2.5M483.5 48v2.5M489.5 48v2.5M501.5 48v2.5M507.5 48v2.5M514.5 48v2.5M520.5 48v2.5M532.5 48v2.5M538.5 48v2.5M544.5 48v2.5M551.5 48v2.5M563.5 48v2.5M569.5 48v2.5M575.5 48v2.5M581.5 48v2.5M594.5 48v2.5M600.5 48v2.5M606.5 48v2.5M612.5 48v2.5M624.5 48v2.5M631.5 48v2.5M637.5 48v2.5M643.5 48v2.5M655.5 48v2.5M661.5 48v2.5M668.5 48v2.5M674.5 48v2.5M686.5 48v2.5M692.5 48v2.5M698.5 48v2.5M705.5 48v2.5M717.5 48v2.5M723.5 48v2.5M729.5 48v2.5M735.5 48v2.5" stroke="#c0c0c0" stroke-width="1" fill="none"/><path d="M0 1H742M1 0V65" stroke="#808080" stroke-width="2" fill="none"/><path d="M741 0V65M0 64H742" stroke="#fff" stroke-width="2" fill="none"/></svg>
<div class="tl2" style="left:18.5px;top:487.5px">0:00</div>
<div class="tl2" style="left:80.1px;top:487.5px">0:20</div>
<div class="tl2" style="left:141.7px;top:487.5px">0:40</div>
<div class="tl2" style="left:203.2px;top:487.5px">1:00</div>
<div class="tl2" style="left:264.8px;top:487.5px">1:20</div>
<div class="tl2" style="left:326.4px;top:487.5px">1:40</div>
<div class="tl2" style="left:388.0px;top:487.5px">2:00</div>
<div class="tl2" style="left:449.6px;top:487.5px">2:20</div>
<div class="tl2" style="left:511.1px;top:487.5px">2:40</div>
<div class="tl2" style="left:572.7px;top:487.5px">3:00</div>
<div class="tl2" style="left:634.3px;top:487.5px">3:20</div>
<div class="tl2" style="left:695.9px;top:487.5px">3:40</div>
<div class="abs" style="left:773px;top:220px;width:17px;height:286.5px;background:#4b4b4b"></div>
<div class="abs" style="left:775px;top:239px;width:13.5px;height:235.5px;background:#8d8d8d"></div>
<svg class="i" style="left:776px;top:224px" width="11" height="8" viewBox="0 0 11 8" ><path d="M0.8 7L5.5 1.6L10.2 7" fill="none" stroke="#202020" stroke-width="2.6"/></svg>
<svg class="i" style="left:776px;top:494px" width="11" height="8" viewBox="0 0 11 8" ><path d="M0.8 1L5.5 6.4L10.2 1" fill="none" stroke="#202020" stroke-width="2.6"/></svg>
<div class="abs" style="left:8px;top:507px;width:765px;height:17px;background:#4b4b4b"></div>
<div class="abs" style="left:35.5px;top:508.5px;width:695px;height:14px;background:#8d8d8d"></div>
<svg class="i" style="left:12px;top:510px" width="9" height="11" viewBox="0 0 9 11" ><path d="M8 0.8L1.6 5.5L8 10.2" fill="none" stroke="#202020" stroke-width="2.8"/></svg>
<svg class="i" style="left:760px;top:510px" width="9" height="11" viewBox="0 0 9 11" ><path d="M1 0.8L7.4 5.5L1 10.2" fill="none" stroke="#202020" stroke-width="2.8"/></svg>
<div id="status">
<div class="c cj" style="left:13px;top:4px">立体声</div>
<svg class="i" style="left:60px;top:9px" width="8" height="5" viewBox="0 0 8 5" ><path d="M0 4.5L3.8 0L7.6 4.5Z" fill="#d8d8d8"/></svg>
<div class="vsep" style="left:69px;top:3px;height:15px"></div><div class="vsep" style="left:69px;top:21px;height:16px"></div>
<div class="c" style="right:375px;top:4.5px">0:00.000 to 3:59.198 (3:59.198)</div>
<svg class="i" style="left:479px;top:10px" width="8" height="5" viewBox="0 0 8 5" ><path d="M0 0L3.8 4.5L7.6 0Z" fill="#d8d8d8"/></svg>
<div class="vsep" style="left:489px;top:3px;height:15px"></div>
<div class="c" style="left:530px;top:4.5px">16.210</div>
<svg class="i" style="left:599px;top:9px" width="8" height="5" viewBox="0 0 8 5" ><path d="M0 4.5L3.8 0L7.6 4.5Z" fill="#d8d8d8"/></svg>
<div class="vsep" style="left:609px;top:3px;height:15px"></div>
<div class="c cj" style="left:11px;top:22px">修改状态</div>
<div class="c" style="right:369px;top:22px">Original Codec 16 bit, 44100Hz, stereo</div>
<svg class="i" style="left:770px;top:26px" width="11" height="11" viewBox="0 0 11 11" ><path d="M10 1L1 10M10 5L5 10M10 8.5L8.5 10" stroke="#444" stroke-width="1"/></svg>
</div>
<div id="menu">
<div class="mi" style="top:-0.5px"><span class="t">删改(<u>C</u>)...</span><svg class="i" style="left:5px;top:2.2px" width="16" height="16" viewBox="0 0 16 16" ><rect x="0" y="2.5" width="16" height="11.5" fill="#000"/><circle cx="8" cy="8.2" r="3.9" fill="none" stroke="#e00000" stroke-width="1.5"/><path d="M5.4 5.6L10.6 10.8" stroke="#e00000" stroke-width="1.5"/></svg></div>
<div class="mi" style="top:21.5px"><span class="t">压缩器/扩展器(<u>K</u>)...</span><svg class="i" style="left:5px;top:2.2px" width="16" height="16" viewBox="0 0 16 16" ><path d="M3.5 1L7 5H5V11H7L3.5 15L0 11H2V5H0Z" fill="#0a5cff"/><path d="M10.5 1H13.5V3.5H15.5L12 7.5L8.5 3.5H10.5ZM12 8.5L15.5 12.5H13.5V15H10.5V12.5H8.5Z" fill="#0a5cff"/></svg></div>
<div class="mi" style="top:43.5px"><span class="t">多普勒(<u>D</u>)...</span><svg class="i" style="left:5px;top:2.2px" width="16" height="16" viewBox="0 0 16 16" ><circle cx="8" cy="6" r="5.6" fill="url(#ball)"/><path d="M3 14.5H13" stroke="#e8d060" stroke-width="1.2"/><circle cx="2.5" cy="14.5" r="1.6" fill="#fff" stroke="#aaa" stroke-width="0.8"/><circle cx="13.5" cy="14.5" r="1.6" fill="#fff" stroke="#aaa" stroke-width="0.8"/></svg></div>
<div class="mi" style="top:65.5px"><span class="t">动态(<u>Y</u>)...</span><svg class="i" style="left:5px;top:2.2px" width="16" height="16" viewBox="0 0 16 16" ><path d="M3 13L12 3" stroke="#f0d040" stroke-width="1.6"/><circle cx="12.5" cy="2.5" r="1.7" fill="#fff" stroke="#aaa" stroke-width="0.8"/><circle cx="2.5" cy="13.5" r="1.7" fill="#fff" stroke="#aaa" stroke-width="0.8"/><text x="0.5" y="7.5" font-family="Liberation Sans,sans-serif" font-size="8.5" font-weight="bold" fill="#333">Y</text><text x="9" y="16" font-family="Liberation Sans,sans-serif" font-size="8.5" font-weight="bold" fill="#333">X</text></svg></div>
<div class="mi" style="top:87.5px"><span class="t">回声(<u>E</u>)...</span><svg class="i" style="left:5px;top:2.2px" width="16" height="16" viewBox="0 0 16 16" ><path d="M0.5 6.6H9V9.4H0.5Z" fill="#0818d0"/><path d="M5.5 1.5L12 8L5.5 14.5" fill="none" stroke="#0a5cff" stroke-width="2.8"/><circle cx="13" cy="8" r="2.6" fill="#30b0ff"/></svg></div>
<div class="mi" style="top:109.5px"><span class="t">滤波器(<u>F</u>)</span><span class="arr"></span></div>
<div class="mi" style="top:131.5px"><span class="t">镶边器(<u>G</u>)...</span><svg class="i" style="left:5px;top:2.2px" width="16" height="16" viewBox="0 0 16 16" ><path d="M0.5 12Q2 2 4.5 8T8 6T11 9T15.5 3" fill="none" stroke="#40a0e8" stroke-width="1.2"/><path d="M0.5 10Q3 17 6 8T11 5T15 11" fill="none" stroke="#1818d0" stroke-width="1.4"/></svg></div>
<div class="mi" style="top:153.5px"><span class="t">频率混合(<u>B</u>)...</span><svg class="i" style="left:5px;top:2.2px" width="16" height="16" viewBox="0 0 16 16" ><defs><linearGradient id="rb2" x1="0" x2="1" y1="0" y2="0"><stop offset="0" stop-color="#8000e0"/><stop offset="0.25" stop-color="#0040ff"/><stop offset="0.5" stop-color="#00e060"/><stop offset="0.75" stop-color="#ffe000"/><stop offset="1" stop-color="#ff2000"/></linearGradient></defs><path d="M4.5 1H11.5V4.5H15V11.5H11.5V15H4.5V11.5H1V4.5H4.5Z" fill="url(#rb2)"/><rect x="4.5" y="11.5" width="7" height="3.5" fill="#6000c0" opacity="0.6"/><rect x="4.5" y="1" width="7" height="3.5" fill="#ff3020" opacity="0.5"/></svg></div>
<div class="mi" style="top:175.5px"><span class="t">内插(<u>L</u>)</span><svg class="i" style="left:5px;top:2.2px" width="16" height="16" viewBox="0 0 16 16" ><path d="M2.5 13.5L8 8L13 2.5V13.5Z" fill="none" stroke="#b0b0b0" stroke-width="1"/><circle cx="13" cy="2.5" r="1.8" fill="#fff" stroke="#aaa" stroke-width="0.8"/><circle cx="2.5" cy="13.5" r="1.8" fill="#fff" stroke="#aaa" stroke-width="0.8"/><rect x="6" y="6.5" width="3.4" height="3.4" fill="#30a0f0"/></svg></div>
<div class="mi" style="top:197.5px"><span class="t">倒转(<u>I</u>)</span><svg class="i" style="left:5px;top:2.2px" width="16" height="16" viewBox="0 0 16 16" ><path d="M11 14V7Q11 3 7.5 3Q4.5 3 4.5 7V9" fill="none" stroke="#0a5cff" stroke-width="2.4"/><path d="M1 8H8L4.5 12.5Z" fill="#0a5cff"/></svg></div>
<div class="mi" style="top:219.5px"><span class="t">机械化(<u>Z</u>)...</span><svg class="i" style="left:5px;top:2.2px" width="16" height="16" viewBox="0 0 16 16" ><rect x="3" y="3" width="10" height="10" fill="#0a14f0"/><path d="M8 0L10.3 5.7L16 8L10.3 10.3L8 16L5.7 10.3L0 8L5.7 5.7Z" fill="#0a5cff"/><circle cx="8" cy="8" r="2" fill="#50b8ff"/></svg></div>
<div class="mi" style="top:241.5px"><span class="t">多声道混音器(<u>N</u>)...</span><svg class="i" style="left:5px;top:2.2px" width="16" height="16" viewBox="0 0 16 16" ><path d="M1.2 0.9L4.6 1.1L4.4 6.8L1.2 5.7Z" fill="#ffffff" stroke="#aaa" stroke-width="0.25"/><path d="M5.7 -0.4L9.7 -0.4L8.0 2.5L4.6 4.9L4.4 1.9Z" fill="#f00000" stroke="#aaa" stroke-width="0.25"/><path d="M9.7 0.7L14.7 0.9L14.3 3.8L8.2 3.4Z" fill="#28b428" stroke="#aaa" stroke-width="0.25"/><path d="M10.1 4.2L14.7 4.4L15.8 9.1L11.8 7.0Z" fill="#1e8cf0" stroke="#aaa" stroke-width="0.25"/><path d="M11.8 8.2L14.7 9.5L14.7 14.1L11.3 13.7Z" fill="#f0dc90" stroke="#aaa" stroke-width="0.25"/><path d="M11.1 9.7L11.1 15.0L6.3 15.2L7.5 12.0Z" fill="#8c4a10" stroke="#aaa" stroke-width="0.25"/><path d="M1.0 10.8L6.3 11.4L7.1 12.4L6.1 14.1L1.2 14.1Z" fill="#808080" stroke="#aaa" stroke-width="0.25"/><path d="M0.2 5.7L2.5 6.3L5.7 10.8L1.0 10.5Z" fill="#6a5acd" stroke="#aaa" stroke-width="0.25"/><circle cx="7.6" cy="7.8" r="3.1" fill="#2a8cf0"/><path d="M7.6 5.4V10.2M5.2 7.8H10.0" stroke="#d8f4ff" stroke-width="1.3"/></svg></div>
<div class="mi" style="top:263.5px"><span class="t">偏移(<u>O</u>)...</span><svg class="i" style="left:5px;top:2.2px" width="16" height="16" viewBox="0 0 16 16" ><rect x="1" y="7" width="14" height="2" fill="#0818e0"/><path d="M8 0.5L11.5 5H9V6H7V5H4.5ZM8 15.5L11.5 11H9V10H7V11H4.5Z" fill="#0a5cff"/></svg></div>
<div class="mi" style="top:285.5px"><span class="t">音高(<u>P</u>)...</span><svg class="i" style="left:5px;top:2.2px" width="16" height="16" viewBox="0 0 16 16" ><path d="M1.5 1.5H15M1.5 5.5H15M1.5 10H15M1.5 14.5H15" stroke="#b4b4b4" stroke-width="1" fill="none"/><path d="M1.5 1V15" stroke="#444" stroke-width="1.2"/><ellipse cx="7" cy="10.5" rx="2.8" ry="2.4" fill="#1040f0"/><path d="M9.2 10.5V2L13 5.5" stroke="#1040f0" stroke-width="1.4" fill="none"/></svg></div>
<div class="mi dis" style="top:307.5px"><span class="t">插件(<u>Q</u>)</span><svg class="i" style="left:5px;top:2.2px" width="16" height="16" viewBox="0 0 16 16" ><path d="M5 1V6M11 1V6" stroke="#d0d0d0" stroke-width="1.8"/><path d="M2 6H14V8Q14 12 10 12.5V15H6V12.5Q2 12 2 8Z" fill="#d4d4d4"/></svg></div>
<div class="mi" style="top:329.5px"><span class="t">混响(<u>V</u>)...</span><svg class="i" style="left:5px;top:2.2px" width="16" height="16" viewBox="0 0 16 16" ><path d="M0.5 6.5H9.5V3.5L15.5 8L9.5 12.5V9.5H0.5Z" fill="#0818e0"/><path d="M5 1Q9 0 12 3M5 15Q9 16 12 13" fill="none" stroke="#30a0ff" stroke-width="1.6"/><path d="M3 0.5L6.5 0.5L5 3.5ZM3 15.5L6.5 15.5L5 12.5Z" fill="#30a0ff"/></svg></div>
<div class="mi" style="top:351.5px"><span class="t">反向(<u>R</u>)</span><svg class="i" style="left:5px;top:2.2px" width="16" height="16" viewBox="0 0 16 16" ><path d="M0.5 8L6.5 3V6H15.5L13.5 8L15.5 10H6.5V13Z" fill="#0a5cff"/></svg></div>
<div class="mi" style="top:373.5px"><span class="t">立体声(<u>S</u>)</span><span class="arr"></span></div>
<div class="mi" style="top:395.5px"><span class="t">时间(<u>T</u>)...</span><svg class="i" style="left:5px;top:2.2px" width="16" height="16" viewBox="0 0 16 16" ><circle cx="8" cy="8" r="7.2" fill="#f4f4f4" stroke="#888" stroke-width="1.2"/><circle cx="8" cy="8" r="5.6" fill="none" stroke="#ccc" stroke-width="1" stroke-dasharray="1 1.9"/><path d="M8 8.5V2.8M8 8.5L6 12" stroke="#1020e0" stroke-width="1.4" fill="none"/></svg></div>
<div class="mi" style="top:417.5px"><span class="t">旁白(<u>W</u>)...</span><svg class="i" style="left:5px;top:2.2px" width="16" height="16" viewBox="0 0 16 16" ><path d="M5 1.5H14.5V8H9L6.5 10.5V8H5Z" fill="#b8c4d0" stroke="#7090c0" stroke-width="0.8"/><path d="M1 9H4L6 12H10L12 9H14V15.5H1Z" fill="#0818e0"/></svg></div>
<div class="mi" style="top:439.5px"><span class="t">音量(<u>U</u>)</span><span class="arr"></span></div>
<div class="abs" style="left:27px;top:463.0px;width:158px;height:2px;background:linear-gradient(#808080 50%,#dcdcdc 50%)"></div>
<div class="mi" style="top:467.0px"><span class="t">回放速率(<u>X</u>)...</span><svg class="i" style="left:5px;top:2.2px" width="16" height="16" viewBox="0 0 16 16" ><text x="2.6" y="8.2" font-family="Liberation Sans,sans-serif" font-size="9.5" fill="#404040" textLength="10.5">Hz</text><path d="M4 9.8L11.5 12.8L4 15.8Z" fill="#10e010"/></svg></div>
<div class="mi" style="top:489.0px"><span class="t">重新采样(<u>M</u>)...</span><svg class="i" style="left:5px;top:2.2px" width="16" height="16" viewBox="0 0 16 16" ><text x="2.6" y="8.2" font-family="Liberation Sans,sans-serif" font-size="9.5" fill="#404040" textLength="10.5">Hz</text><path d="M2 13H14" stroke="#aaa" stroke-width="1"/><circle cx="2.3" cy="13" r="1.3" fill="#fff" stroke="#999" stroke-width="0.7"/><circle cx="8" cy="13" r="1.3" fill="#fff" stroke="#999" stroke-width="0.7"/><circle cx="13.7" cy="13" r="1.3" fill="#fff" stroke="#999" stroke-width="0.7"/></svg></div>
</div>
<div id="frame"></div>
</body></html>
